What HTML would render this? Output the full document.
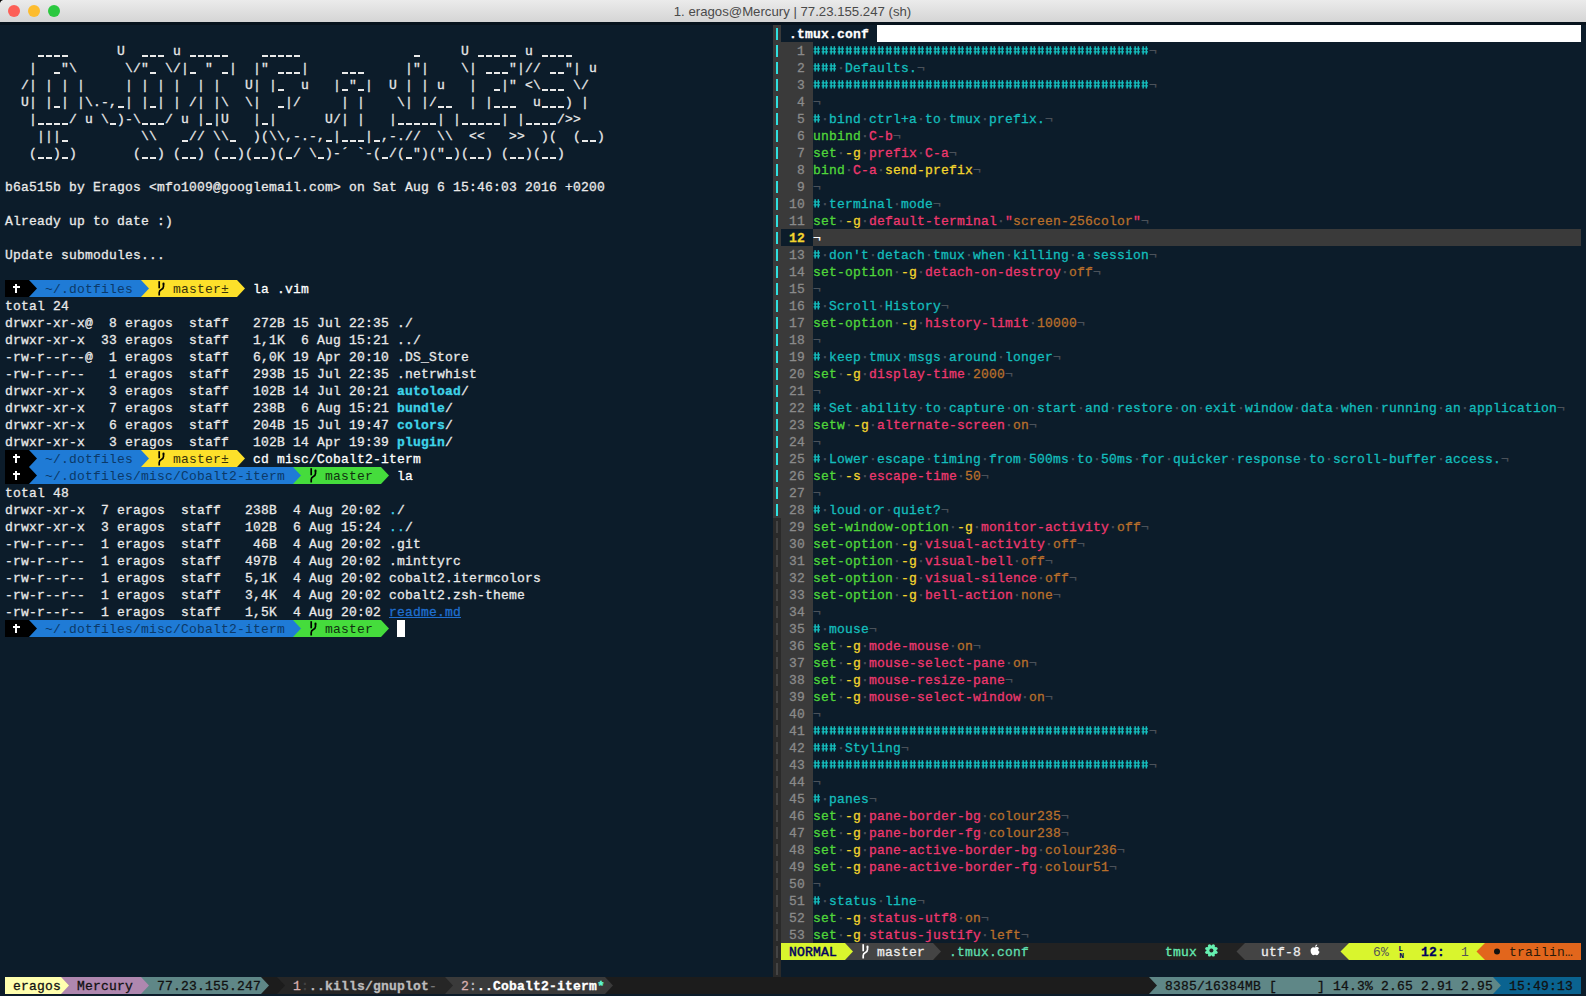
<!DOCTYPE html>
<html><head><meta charset="utf-8">
<style>
html,body{margin:0;padding:0;}
body{width:1586px;height:996px;overflow:hidden;position:relative;background:#0c1c2a;font-family:"Liberation Mono",monospace;font-size:13px;}
.t{position:absolute;white-space:pre;line-height:17px;height:17px;letter-spacing:0.1987px;-webkit-text-stroke:0.3px currentColor;}
.b{position:absolute;height:17px;}
.s{position:absolute;overflow:visible;}
#title{position:absolute;left:0;top:0;width:1586px;height:22px;background:linear-gradient(#ebebeb,#d5d5d5);font-family:"Liberation Sans",sans-serif;font-size:13.2px;color:#4a4a4a;text-align:center;line-height:23px;text-indent:-1px;}
.tl{position:absolute;top:5px;width:12px;height:12px;border-radius:50%;}
</style></head><body>
<div id="title">1. eragos@Mercury | 77.23.155.247 (sh)</div>
<div style="position:absolute;left:0;top:22px;width:1586px;height:3px;background:#07131d"></div>
<svg style="position:absolute;left:0;top:0" width="4" height="4"><path d="M0 0H3Q0.6 0.6 0 3Z" fill="#000"/></svg>
<div class="tl" style="left:8px;background:#fc5f57;border:0"></div>
<div class="tl" style="left:28px;background:#fdbc2e"></div>
<div class="tl" style="left:48px;background:#2bc83f"></div>
<span class="t" style="left:5px;top:43px;color:#e9e9e9;">              U      u                                   U       u     </span>
<div style="position:absolute;left:37.7px;top:55.4px;width:6.6px;height:1.5px;background:#e9e9e9;"></div>
<div style="position:absolute;left:45.7px;top:55.4px;width:6.6px;height:1.5px;background:#e9e9e9;"></div>
<div style="position:absolute;left:53.7px;top:55.4px;width:6.6px;height:1.5px;background:#e9e9e9;"></div>
<div style="position:absolute;left:61.7px;top:55.4px;width:6.6px;height:1.5px;background:#e9e9e9;"></div>
<div style="position:absolute;left:141.7px;top:55.4px;width:6.6px;height:1.5px;background:#e9e9e9;"></div>
<div style="position:absolute;left:149.7px;top:55.4px;width:6.6px;height:1.5px;background:#e9e9e9;"></div>
<div style="position:absolute;left:157.7px;top:55.4px;width:6.6px;height:1.5px;background:#e9e9e9;"></div>
<div style="position:absolute;left:189.7px;top:55.4px;width:6.6px;height:1.5px;background:#e9e9e9;"></div>
<div style="position:absolute;left:197.7px;top:55.4px;width:6.6px;height:1.5px;background:#e9e9e9;"></div>
<div style="position:absolute;left:205.7px;top:55.4px;width:6.6px;height:1.5px;background:#e9e9e9;"></div>
<div style="position:absolute;left:213.7px;top:55.4px;width:6.6px;height:1.5px;background:#e9e9e9;"></div>
<div style="position:absolute;left:221.7px;top:55.4px;width:6.6px;height:1.5px;background:#e9e9e9;"></div>
<div style="position:absolute;left:261.7px;top:55.4px;width:6.6px;height:1.5px;background:#e9e9e9;"></div>
<div style="position:absolute;left:269.7px;top:55.4px;width:6.6px;height:1.5px;background:#e9e9e9;"></div>
<div style="position:absolute;left:277.7px;top:55.4px;width:6.6px;height:1.5px;background:#e9e9e9;"></div>
<div style="position:absolute;left:285.7px;top:55.4px;width:6.6px;height:1.5px;background:#e9e9e9;"></div>
<div style="position:absolute;left:293.7px;top:55.4px;width:6.6px;height:1.5px;background:#e9e9e9;"></div>
<div style="position:absolute;left:413.7px;top:55.4px;width:6.6px;height:1.5px;background:#e9e9e9;"></div>
<div style="position:absolute;left:477.7px;top:55.4px;width:6.6px;height:1.5px;background:#e9e9e9;"></div>
<div style="position:absolute;left:485.7px;top:55.4px;width:6.6px;height:1.5px;background:#e9e9e9;"></div>
<div style="position:absolute;left:493.7px;top:55.4px;width:6.6px;height:1.5px;background:#e9e9e9;"></div>
<div style="position:absolute;left:501.7px;top:55.4px;width:6.6px;height:1.5px;background:#e9e9e9;"></div>
<div style="position:absolute;left:509.7px;top:55.4px;width:6.6px;height:1.5px;background:#e9e9e9;"></div>
<div style="position:absolute;left:541.7px;top:55.4px;width:6.6px;height:1.5px;background:#e9e9e9;"></div>
<div style="position:absolute;left:549.7px;top:55.4px;width:6.6px;height:1.5px;background:#e9e9e9;"></div>
<div style="position:absolute;left:557.7px;top:55.4px;width:6.6px;height:1.5px;background:#e9e9e9;"></div>
<div style="position:absolute;left:565.7px;top:55.4px;width:6.6px;height:1.5px;background:#e9e9e9;"></div>
<span class="t" style="left:5px;top:60px;color:#e9e9e9;">   |   &quot;\      \/&quot;  \/|  &quot;  |  |&quot;    |            |&quot;|    \|    &quot;|//   &quot;| u</span>
<div style="position:absolute;left:53.7px;top:72.4px;width:6.6px;height:1.5px;background:#e9e9e9;"></div>
<div style="position:absolute;left:149.7px;top:72.4px;width:6.6px;height:1.5px;background:#e9e9e9;"></div>
<div style="position:absolute;left:189.7px;top:72.4px;width:6.6px;height:1.5px;background:#e9e9e9;"></div>
<div style="position:absolute;left:221.7px;top:72.4px;width:6.6px;height:1.5px;background:#e9e9e9;"></div>
<div style="position:absolute;left:277.7px;top:72.4px;width:6.6px;height:1.5px;background:#e9e9e9;"></div>
<div style="position:absolute;left:285.7px;top:72.4px;width:6.6px;height:1.5px;background:#e9e9e9;"></div>
<div style="position:absolute;left:293.7px;top:72.4px;width:6.6px;height:1.5px;background:#e9e9e9;"></div>
<div style="position:absolute;left:341.7px;top:72.4px;width:6.6px;height:1.5px;background:#e9e9e9;"></div>
<div style="position:absolute;left:349.7px;top:72.4px;width:6.6px;height:1.5px;background:#e9e9e9;"></div>
<div style="position:absolute;left:357.7px;top:72.4px;width:6.6px;height:1.5px;background:#e9e9e9;"></div>
<div style="position:absolute;left:485.7px;top:72.4px;width:6.6px;height:1.5px;background:#e9e9e9;"></div>
<div style="position:absolute;left:493.7px;top:72.4px;width:6.6px;height:1.5px;background:#e9e9e9;"></div>
<div style="position:absolute;left:501.7px;top:72.4px;width:6.6px;height:1.5px;background:#e9e9e9;"></div>
<div style="position:absolute;left:549.7px;top:72.4px;width:6.6px;height:1.5px;background:#e9e9e9;"></div>
<div style="position:absolute;left:557.7px;top:72.4px;width:6.6px;height:1.5px;background:#e9e9e9;"></div>
<span class="t" style="left:5px;top:77px;color:#e9e9e9;">  /| | | |     | | | |  | |   U| |   u   | &quot; |  U | | u   |   |&quot; &lt;\    \/</span>
<div style="position:absolute;left:277.7px;top:89.4px;width:6.6px;height:1.5px;background:#e9e9e9;"></div>
<div style="position:absolute;left:341.7px;top:89.4px;width:6.6px;height:1.5px;background:#e9e9e9;"></div>
<div style="position:absolute;left:357.7px;top:89.4px;width:6.6px;height:1.5px;background:#e9e9e9;"></div>
<div style="position:absolute;left:493.7px;top:89.4px;width:6.6px;height:1.5px;background:#e9e9e9;"></div>
<div style="position:absolute;left:541.7px;top:89.4px;width:6.6px;height:1.5px;background:#e9e9e9;"></div>
<div style="position:absolute;left:549.7px;top:89.4px;width:6.6px;height:1.5px;background:#e9e9e9;"></div>
<div style="position:absolute;left:557.7px;top:89.4px;width:6.6px;height:1.5px;background:#e9e9e9;"></div>
<span class="t" style="left:5px;top:94px;color:#e9e9e9;">  U| | | |\.-, | | | | /| |\  \|   |/     | |    \| |/    | |     u   ) |</span>
<div style="position:absolute;left:53.7px;top:106.4px;width:6.6px;height:1.5px;background:#e9e9e9;"></div>
<div style="position:absolute;left:117.7px;top:106.4px;width:6.6px;height:1.5px;background:#e9e9e9;"></div>
<div style="position:absolute;left:149.7px;top:106.4px;width:6.6px;height:1.5px;background:#e9e9e9;"></div>
<div style="position:absolute;left:277.7px;top:106.4px;width:6.6px;height:1.5px;background:#e9e9e9;"></div>
<div style="position:absolute;left:437.7px;top:106.4px;width:6.6px;height:1.5px;background:#e9e9e9;"></div>
<div style="position:absolute;left:445.7px;top:106.4px;width:6.6px;height:1.5px;background:#e9e9e9;"></div>
<div style="position:absolute;left:493.7px;top:106.4px;width:6.6px;height:1.5px;background:#e9e9e9;"></div>
<div style="position:absolute;left:501.7px;top:106.4px;width:6.6px;height:1.5px;background:#e9e9e9;"></div>
<div style="position:absolute;left:509.7px;top:106.4px;width:6.6px;height:1.5px;background:#e9e9e9;"></div>
<div style="position:absolute;left:541.7px;top:106.4px;width:6.6px;height:1.5px;background:#e9e9e9;"></div>
<div style="position:absolute;left:549.7px;top:106.4px;width:6.6px;height:1.5px;background:#e9e9e9;"></div>
<div style="position:absolute;left:557.7px;top:106.4px;width:6.6px;height:1.5px;background:#e9e9e9;"></div>
<span class="t" style="left:5px;top:111px;color:#e9e9e9;">   |    / u \ )-\   / u | |U   | |      U/| |   |     | |     | |    /&gt;&gt;</span>
<div style="position:absolute;left:37.7px;top:123.4px;width:6.6px;height:1.5px;background:#e9e9e9;"></div>
<div style="position:absolute;left:45.7px;top:123.4px;width:6.6px;height:1.5px;background:#e9e9e9;"></div>
<div style="position:absolute;left:53.7px;top:123.4px;width:6.6px;height:1.5px;background:#e9e9e9;"></div>
<div style="position:absolute;left:61.7px;top:123.4px;width:6.6px;height:1.5px;background:#e9e9e9;"></div>
<div style="position:absolute;left:109.7px;top:123.4px;width:6.6px;height:1.5px;background:#e9e9e9;"></div>
<div style="position:absolute;left:141.7px;top:123.4px;width:6.6px;height:1.5px;background:#e9e9e9;"></div>
<div style="position:absolute;left:149.7px;top:123.4px;width:6.6px;height:1.5px;background:#e9e9e9;"></div>
<div style="position:absolute;left:157.7px;top:123.4px;width:6.6px;height:1.5px;background:#e9e9e9;"></div>
<div style="position:absolute;left:205.7px;top:123.4px;width:6.6px;height:1.5px;background:#e9e9e9;"></div>
<div style="position:absolute;left:261.7px;top:123.4px;width:6.6px;height:1.5px;background:#e9e9e9;"></div>
<div style="position:absolute;left:397.7px;top:123.4px;width:6.6px;height:1.5px;background:#e9e9e9;"></div>
<div style="position:absolute;left:405.7px;top:123.4px;width:6.6px;height:1.5px;background:#e9e9e9;"></div>
<div style="position:absolute;left:413.7px;top:123.4px;width:6.6px;height:1.5px;background:#e9e9e9;"></div>
<div style="position:absolute;left:421.7px;top:123.4px;width:6.6px;height:1.5px;background:#e9e9e9;"></div>
<div style="position:absolute;left:429.7px;top:123.4px;width:6.6px;height:1.5px;background:#e9e9e9;"></div>
<div style="position:absolute;left:461.7px;top:123.4px;width:6.6px;height:1.5px;background:#e9e9e9;"></div>
<div style="position:absolute;left:469.7px;top:123.4px;width:6.6px;height:1.5px;background:#e9e9e9;"></div>
<div style="position:absolute;left:477.7px;top:123.4px;width:6.6px;height:1.5px;background:#e9e9e9;"></div>
<div style="position:absolute;left:485.7px;top:123.4px;width:6.6px;height:1.5px;background:#e9e9e9;"></div>
<div style="position:absolute;left:493.7px;top:123.4px;width:6.6px;height:1.5px;background:#e9e9e9;"></div>
<div style="position:absolute;left:525.7px;top:123.4px;width:6.6px;height:1.5px;background:#e9e9e9;"></div>
<div style="position:absolute;left:533.7px;top:123.4px;width:6.6px;height:1.5px;background:#e9e9e9;"></div>
<div style="position:absolute;left:541.7px;top:123.4px;width:6.6px;height:1.5px;background:#e9e9e9;"></div>
<div style="position:absolute;left:549.7px;top:123.4px;width:6.6px;height:1.5px;background:#e9e9e9;"></div>
<span class="t" style="left:5px;top:128px;color:#e9e9e9;">    |||          \\    // \\   )(\\,-.-, |   | ,-.//  \\  &lt;&lt;   &gt;&gt;  )(  (  )</span>
<div style="position:absolute;left:61.7px;top:140.4px;width:6.6px;height:1.5px;background:#e9e9e9;"></div>
<div style="position:absolute;left:181.7px;top:140.4px;width:6.6px;height:1.5px;background:#e9e9e9;"></div>
<div style="position:absolute;left:229.7px;top:140.4px;width:6.6px;height:1.5px;background:#e9e9e9;"></div>
<div style="position:absolute;left:325.7px;top:140.4px;width:6.6px;height:1.5px;background:#e9e9e9;"></div>
<div style="position:absolute;left:341.7px;top:140.4px;width:6.6px;height:1.5px;background:#e9e9e9;"></div>
<div style="position:absolute;left:349.7px;top:140.4px;width:6.6px;height:1.5px;background:#e9e9e9;"></div>
<div style="position:absolute;left:357.7px;top:140.4px;width:6.6px;height:1.5px;background:#e9e9e9;"></div>
<div style="position:absolute;left:373.7px;top:140.4px;width:6.6px;height:1.5px;background:#e9e9e9;"></div>
<div style="position:absolute;left:581.7px;top:140.4px;width:6.6px;height:1.5px;background:#e9e9e9;"></div>
<div style="position:absolute;left:589.7px;top:140.4px;width:6.6px;height:1.5px;background:#e9e9e9;"></div>
<span class="t" style="left:5px;top:145px;color:#e9e9e9;">   (  ) )       (  ) (  ) (  )(  )( / \ )-´ `-( /( &quot;)(&quot; )(  ) (  )(  )</span>
<div style="position:absolute;left:37.7px;top:157.4px;width:6.6px;height:1.5px;background:#e9e9e9;"></div>
<div style="position:absolute;left:45.7px;top:157.4px;width:6.6px;height:1.5px;background:#e9e9e9;"></div>
<div style="position:absolute;left:61.7px;top:157.4px;width:6.6px;height:1.5px;background:#e9e9e9;"></div>
<div style="position:absolute;left:141.7px;top:157.4px;width:6.6px;height:1.5px;background:#e9e9e9;"></div>
<div style="position:absolute;left:149.7px;top:157.4px;width:6.6px;height:1.5px;background:#e9e9e9;"></div>
<div style="position:absolute;left:181.7px;top:157.4px;width:6.6px;height:1.5px;background:#e9e9e9;"></div>
<div style="position:absolute;left:189.7px;top:157.4px;width:6.6px;height:1.5px;background:#e9e9e9;"></div>
<div style="position:absolute;left:221.7px;top:157.4px;width:6.6px;height:1.5px;background:#e9e9e9;"></div>
<div style="position:absolute;left:229.7px;top:157.4px;width:6.6px;height:1.5px;background:#e9e9e9;"></div>
<div style="position:absolute;left:253.7px;top:157.4px;width:6.6px;height:1.5px;background:#e9e9e9;"></div>
<div style="position:absolute;left:261.7px;top:157.4px;width:6.6px;height:1.5px;background:#e9e9e9;"></div>
<div style="position:absolute;left:285.7px;top:157.4px;width:6.6px;height:1.5px;background:#e9e9e9;"></div>
<div style="position:absolute;left:317.7px;top:157.4px;width:6.6px;height:1.5px;background:#e9e9e9;"></div>
<div style="position:absolute;left:381.7px;top:157.4px;width:6.6px;height:1.5px;background:#e9e9e9;"></div>
<div style="position:absolute;left:405.7px;top:157.4px;width:6.6px;height:1.5px;background:#e9e9e9;"></div>
<div style="position:absolute;left:445.7px;top:157.4px;width:6.6px;height:1.5px;background:#e9e9e9;"></div>
<div style="position:absolute;left:469.7px;top:157.4px;width:6.6px;height:1.5px;background:#e9e9e9;"></div>
<div style="position:absolute;left:477.7px;top:157.4px;width:6.6px;height:1.5px;background:#e9e9e9;"></div>
<div style="position:absolute;left:509.7px;top:157.4px;width:6.6px;height:1.5px;background:#e9e9e9;"></div>
<div style="position:absolute;left:517.7px;top:157.4px;width:6.6px;height:1.5px;background:#e9e9e9;"></div>
<div style="position:absolute;left:541.7px;top:157.4px;width:6.6px;height:1.5px;background:#e9e9e9;"></div>
<div style="position:absolute;left:549.7px;top:157.4px;width:6.6px;height:1.5px;background:#e9e9e9;"></div>
<span class="t" style="left:5px;top:179px;color:#e9e9e9;">b6a515b by Eragos &lt;mfo1009@googlemail.com&gt; on Sat Aug 6 15:46:03 2016 +0200</span>
<span class="t" style="left:5px;top:213px;color:#e9e9e9;">Already up to date :)</span>
<span class="t" style="left:5px;top:247px;color:#e9e9e9;">Update submodules...</span>
<div class="b" style="left:5px;top:280px;width:24px;background:#000000;"></div>
<svg class="s" style="left:13px;top:280px" width="8" height="17" viewBox="0 0 8 17"><rect x="2" y="4" width="2" height="9" fill="#ffffff"/><rect x="0" y="6" width="7" height="2" fill="#ffffff"/></svg>
<div class="b" style="left:37px;top:280px;width:104px;background:#1f7bd6;"></div>
<div class="b" style="left:29px;top:280px;width:8px;background:#1f7bd6;"></div>
<svg class="s" style="left:29px;top:280px" width="10" height="17"><polygon points="0,0 8,8.5 0,17" fill="#000000"/></svg>
<span class="t" style="left:45px;top:281px;color:#0b3968;-webkit-text-stroke:0;">~/.dotfiles</span>
<div class="b" style="left:149px;top:280px;width:88px;background:#fde02a;"></div>
<div class="b" style="left:141px;top:280px;width:8px;background:#fde02a;"></div>
<svg class="s" style="left:141px;top:280px" width="10" height="17"><polygon points="0,0 8,8.5 0,17" fill="#1f7bd6"/></svg>
<svg class="s" style="left:157px;top:280px" width="8" height="17" viewBox="0 0 8 17"><path d="M2.2 1.2V8.3" stroke="#000000" stroke-width="1.7" fill="none"/><path d="M6.5 4V6.6Q6.5 8.4 4.4 9.4Q2.2 10.4 2.2 12.6V15.6" stroke="#000000" stroke-width="1.7" fill="none"/><circle cx="6.5" cy="3.7" r="1.1" fill="#000000"/></svg>
<span class="t" style="left:173px;top:281px;color:#36320c;-webkit-text-stroke:0;">master±</span>
<svg class="s" style="left:237px;top:280px" width="10" height="17"><polygon points="0,0 8,8.5 0,17" fill="#fde02a"/></svg>
<span class="t" style="left:253px;top:281px;color:#ffffff;">la .vim</span>
<span class="t" style="left:5px;top:298px;color:#e9e9e9;">total 24</span>
<span class="t" style="left:5px;top:315px;color:#e9e9e9;">drwxr-xr-x@  8 eragos  staff   272B 15 Jul 22:35 </span>
<span class="t" style="left:397px;top:315px;color:#e9e9e9;">./</span>
<span class="t" style="left:5px;top:332px;color:#e9e9e9;">drwxr-xr-x  33 eragos  staff   1,1K  6 Aug 15:21 </span>
<span class="t" style="left:397px;top:332px;color:#e9e9e9;">../</span>
<span class="t" style="left:5px;top:349px;color:#e9e9e9;">-rw-r--r--@  1 eragos  staff   6,0K 19 Apr 20:10 </span>
<span class="t" style="left:397px;top:349px;color:#e9e9e9;">.DS_Store</span>
<span class="t" style="left:5px;top:366px;color:#e9e9e9;">-rw-r--r--   1 eragos  staff   293B 15 Jul 22:35 </span>
<span class="t" style="left:397px;top:366px;color:#e9e9e9;">.netrwhist</span>
<span class="t" style="left:5px;top:383px;color:#e9e9e9;">drwxr-xr-x   3 eragos  staff   102B 14 Jul 20:21 </span>
<span class="t" style="left:397px;top:383px;color:#3fd3e8;font-weight:bold;">autoload</span>
<span class="t" style="left:461px;top:383px;color:#e9e9e9;">/</span>
<span class="t" style="left:5px;top:400px;color:#e9e9e9;">drwxr-xr-x   7 eragos  staff   238B  6 Aug 15:21 </span>
<span class="t" style="left:397px;top:400px;color:#3fd3e8;font-weight:bold;">bundle</span>
<span class="t" style="left:445px;top:400px;color:#e9e9e9;">/</span>
<span class="t" style="left:5px;top:417px;color:#e9e9e9;">drwxr-xr-x   6 eragos  staff   204B 15 Jul 19:47 </span>
<span class="t" style="left:397px;top:417px;color:#3fd3e8;font-weight:bold;">colors</span>
<span class="t" style="left:445px;top:417px;color:#e9e9e9;">/</span>
<span class="t" style="left:5px;top:434px;color:#e9e9e9;">drwxr-xr-x   3 eragos  staff   102B 14 Apr 19:39 </span>
<span class="t" style="left:397px;top:434px;color:#3fd3e8;font-weight:bold;">plugin</span>
<span class="t" style="left:445px;top:434px;color:#e9e9e9;">/</span>
<div class="b" style="left:5px;top:450px;width:24px;background:#000000;"></div>
<svg class="s" style="left:13px;top:450px" width="8" height="17" viewBox="0 0 8 17"><rect x="2" y="4" width="2" height="9" fill="#ffffff"/><rect x="0" y="6" width="7" height="2" fill="#ffffff"/></svg>
<div class="b" style="left:37px;top:450px;width:104px;background:#1f7bd6;"></div>
<div class="b" style="left:29px;top:450px;width:8px;background:#1f7bd6;"></div>
<svg class="s" style="left:29px;top:450px" width="10" height="17"><polygon points="0,0 8,8.5 0,17" fill="#000000"/></svg>
<span class="t" style="left:45px;top:451px;color:#0b3968;-webkit-text-stroke:0;">~/.dotfiles</span>
<div class="b" style="left:149px;top:450px;width:88px;background:#fde02a;"></div>
<div class="b" style="left:141px;top:450px;width:8px;background:#fde02a;"></div>
<svg class="s" style="left:141px;top:450px" width="10" height="17"><polygon points="0,0 8,8.5 0,17" fill="#1f7bd6"/></svg>
<svg class="s" style="left:157px;top:450px" width="8" height="17" viewBox="0 0 8 17"><path d="M2.2 1.2V8.3" stroke="#000000" stroke-width="1.7" fill="none"/><path d="M6.5 4V6.6Q6.5 8.4 4.4 9.4Q2.2 10.4 2.2 12.6V15.6" stroke="#000000" stroke-width="1.7" fill="none"/><circle cx="6.5" cy="3.7" r="1.1" fill="#000000"/></svg>
<span class="t" style="left:173px;top:451px;color:#36320c;-webkit-text-stroke:0;">master±</span>
<svg class="s" style="left:237px;top:450px" width="10" height="17"><polygon points="0,0 8,8.5 0,17" fill="#fde02a"/></svg>
<span class="t" style="left:253px;top:451px;color:#ffffff;">cd misc/Cobalt2-iterm</span>
<div class="b" style="left:5px;top:467px;width:24px;background:#000000;"></div>
<svg class="s" style="left:13px;top:467px" width="8" height="17" viewBox="0 0 8 17"><rect x="2" y="4" width="2" height="9" fill="#ffffff"/><rect x="0" y="6" width="7" height="2" fill="#ffffff"/></svg>
<div class="b" style="left:37px;top:467px;width:256px;background:#1f7bd6;"></div>
<div class="b" style="left:29px;top:467px;width:8px;background:#1f7bd6;"></div>
<svg class="s" style="left:29px;top:467px" width="10" height="17"><polygon points="0,0 8,8.5 0,17" fill="#000000"/></svg>
<span class="t" style="left:45px;top:468px;color:#0b3968;-webkit-text-stroke:0;">~/.dotfiles/misc/Cobalt2-iterm</span>
<div class="b" style="left:301px;top:467px;width:80px;background:#45dc3c;"></div>
<div class="b" style="left:293px;top:467px;width:8px;background:#45dc3c;"></div>
<svg class="s" style="left:293px;top:467px" width="10" height="17"><polygon points="0,0 8,8.5 0,17" fill="#1f7bd6"/></svg>
<svg class="s" style="left:309px;top:467px" width="8" height="17" viewBox="0 0 8 17"><path d="M2.2 1.2V8.3" stroke="#000000" stroke-width="1.7" fill="none"/><path d="M6.5 4V6.6Q6.5 8.4 4.4 9.4Q2.2 10.4 2.2 12.6V15.6" stroke="#000000" stroke-width="1.7" fill="none"/><circle cx="6.5" cy="3.7" r="1.1" fill="#000000"/></svg>
<span class="t" style="left:325px;top:468px;color:#103010;-webkit-text-stroke:0;">master</span>
<svg class="s" style="left:381px;top:467px" width="10" height="17"><polygon points="0,0 8,8.5 0,17" fill="#45dc3c"/></svg>
<span class="t" style="left:397px;top:468px;color:#ffffff;">la</span>
<span class="t" style="left:5px;top:485px;color:#e9e9e9;">total 48</span>
<span class="t" style="left:5px;top:502px;color:#e9e9e9;">drwxr-xr-x  7 eragos  staff   238B  4 Aug 20:02 </span>
<span class="t" style="left:389px;top:502px;color:#3fd3e8;">.</span>
<span class="t" style="left:397px;top:502px;color:#e9e9e9;">/</span>
<span class="t" style="left:5px;top:519px;color:#e9e9e9;">drwxr-xr-x  3 eragos  staff   102B  6 Aug 15:24 </span>
<span class="t" style="left:389px;top:519px;color:#3fd3e8;">..</span>
<span class="t" style="left:405px;top:519px;color:#e9e9e9;">/</span>
<span class="t" style="left:5px;top:536px;color:#e9e9e9;">-rw-r--r--  1 eragos  staff    46B  4 Aug 20:02 </span>
<span class="t" style="left:389px;top:536px;color:#e9e9e9;">.git</span>
<span class="t" style="left:5px;top:553px;color:#e9e9e9;">-rw-r--r--  1 eragos  staff   497B  4 Aug 20:02 </span>
<span class="t" style="left:389px;top:553px;color:#e9e9e9;">.minttyrc</span>
<span class="t" style="left:5px;top:570px;color:#e9e9e9;">-rw-r--r--  1 eragos  staff   5,1K  4 Aug 20:02 </span>
<span class="t" style="left:389px;top:570px;color:#e9e9e9;">cobalt2.itermcolors</span>
<span class="t" style="left:5px;top:587px;color:#e9e9e9;">-rw-r--r--  1 eragos  staff   3,4K  4 Aug 20:02 </span>
<span class="t" style="left:389px;top:587px;color:#e9e9e9;">cobalt2.zsh-theme</span>
<span class="t" style="left:5px;top:604px;color:#e9e9e9;">-rw-r--r--  1 eragos  staff   1,5K  4 Aug 20:02 </span>
<span class="t" style="left:389px;top:604px;color:#1f6fd0;text-decoration:underline;">readme.md</span>
<div class="b" style="left:5px;top:620px;width:24px;background:#000000;"></div>
<svg class="s" style="left:13px;top:620px" width="8" height="17" viewBox="0 0 8 17"><rect x="2" y="4" width="2" height="9" fill="#ffffff"/><rect x="0" y="6" width="7" height="2" fill="#ffffff"/></svg>
<div class="b" style="left:37px;top:620px;width:256px;background:#1f7bd6;"></div>
<div class="b" style="left:29px;top:620px;width:8px;background:#1f7bd6;"></div>
<svg class="s" style="left:29px;top:620px" width="10" height="17"><polygon points="0,0 8,8.5 0,17" fill="#000000"/></svg>
<span class="t" style="left:45px;top:621px;color:#0b3968;-webkit-text-stroke:0;">~/.dotfiles/misc/Cobalt2-iterm</span>
<div class="b" style="left:301px;top:620px;width:80px;background:#45dc3c;"></div>
<div class="b" style="left:293px;top:620px;width:8px;background:#45dc3c;"></div>
<svg class="s" style="left:293px;top:620px" width="10" height="17"><polygon points="0,0 8,8.5 0,17" fill="#1f7bd6"/></svg>
<svg class="s" style="left:309px;top:620px" width="8" height="17" viewBox="0 0 8 17"><path d="M2.2 1.2V8.3" stroke="#000000" stroke-width="1.7" fill="none"/><path d="M6.5 4V6.6Q6.5 8.4 4.4 9.4Q2.2 10.4 2.2 12.6V15.6" stroke="#000000" stroke-width="1.7" fill="none"/><circle cx="6.5" cy="3.7" r="1.1" fill="#000000"/></svg>
<span class="t" style="left:325px;top:621px;color:#103010;-webkit-text-stroke:0;">master</span>
<svg class="s" style="left:381px;top:620px" width="10" height="17"><polygon points="0,0 8,8.5 0,17" fill="#45dc3c"/></svg>
<div class="b" style="left:397px;top:620px;width:8px;background:#ffffff;"></div>
<div class="b" style="left:773px;top:25px;width:8px;background:#3a3a3a;"></div>
<div style="position:absolute;left:776px;top:28px;width:2px;height:12px;background:#2fe0e0;"></div>
<div class="b" style="left:773px;top:42px;width:8px;background:#3a3a3a;"></div>
<div style="position:absolute;left:776px;top:45px;width:2px;height:12px;background:#2fe0e0;"></div>
<div class="b" style="left:773px;top:59px;width:8px;background:#3a3a3a;"></div>
<div style="position:absolute;left:776px;top:62px;width:2px;height:12px;background:#2fe0e0;"></div>
<div class="b" style="left:773px;top:76px;width:8px;background:#3a3a3a;"></div>
<div style="position:absolute;left:776px;top:79px;width:2px;height:12px;background:#2fe0e0;"></div>
<div class="b" style="left:773px;top:93px;width:8px;background:#3a3a3a;"></div>
<div style="position:absolute;left:776px;top:96px;width:2px;height:12px;background:#2fe0e0;"></div>
<div class="b" style="left:773px;top:110px;width:8px;background:#3a3a3a;"></div>
<div style="position:absolute;left:776px;top:113px;width:2px;height:12px;background:#2fe0e0;"></div>
<div class="b" style="left:773px;top:127px;width:8px;background:#3a3a3a;"></div>
<div style="position:absolute;left:776px;top:130px;width:2px;height:12px;background:#2fe0e0;"></div>
<div class="b" style="left:773px;top:144px;width:8px;background:#3a3a3a;"></div>
<div style="position:absolute;left:776px;top:147px;width:2px;height:12px;background:#2fe0e0;"></div>
<div class="b" style="left:773px;top:161px;width:8px;background:#3a3a3a;"></div>
<div style="position:absolute;left:776px;top:164px;width:2px;height:12px;background:#2fe0e0;"></div>
<div class="b" style="left:773px;top:178px;width:8px;background:#3a3a3a;"></div>
<div style="position:absolute;left:776px;top:181px;width:2px;height:12px;background:#2fe0e0;"></div>
<div class="b" style="left:773px;top:195px;width:8px;background:#3a3a3a;"></div>
<div style="position:absolute;left:776px;top:198px;width:2px;height:12px;background:#2fe0e0;"></div>
<div class="b" style="left:773px;top:212px;width:8px;background:#3a3a3a;"></div>
<div style="position:absolute;left:776px;top:215px;width:2px;height:12px;background:#2fe0e0;"></div>
<div class="b" style="left:773px;top:229px;width:8px;background:#3a3a3a;"></div>
<div style="position:absolute;left:776px;top:232px;width:2px;height:12px;background:#2fe0e0;"></div>
<div class="b" style="left:773px;top:246px;width:8px;background:#3a3a3a;"></div>
<div style="position:absolute;left:776px;top:249px;width:2px;height:12px;background:#2fe0e0;"></div>
<div class="b" style="left:773px;top:263px;width:8px;background:#3a3a3a;"></div>
<div style="position:absolute;left:776px;top:266px;width:2px;height:12px;background:#2fe0e0;"></div>
<div class="b" style="left:773px;top:280px;width:8px;background:#3a3a3a;"></div>
<div style="position:absolute;left:776px;top:283px;width:2px;height:12px;background:#2fe0e0;"></div>
<div class="b" style="left:773px;top:297px;width:8px;background:#3a3a3a;"></div>
<div style="position:absolute;left:776px;top:300px;width:2px;height:12px;background:#2fe0e0;"></div>
<div class="b" style="left:773px;top:314px;width:8px;background:#3a3a3a;"></div>
<div style="position:absolute;left:776px;top:317px;width:2px;height:12px;background:#2fe0e0;"></div>
<div class="b" style="left:773px;top:331px;width:8px;background:#3a3a3a;"></div>
<div style="position:absolute;left:776px;top:334px;width:2px;height:12px;background:#2fe0e0;"></div>
<div class="b" style="left:773px;top:348px;width:8px;background:#3a3a3a;"></div>
<div style="position:absolute;left:776px;top:351px;width:2px;height:12px;background:#2fe0e0;"></div>
<div class="b" style="left:773px;top:365px;width:8px;background:#3a3a3a;"></div>
<div style="position:absolute;left:776px;top:368px;width:2px;height:12px;background:#2fe0e0;"></div>
<div class="b" style="left:773px;top:382px;width:8px;background:#3a3a3a;"></div>
<div style="position:absolute;left:776px;top:385px;width:2px;height:12px;background:#2fe0e0;"></div>
<div class="b" style="left:773px;top:399px;width:8px;background:#3a3a3a;"></div>
<div style="position:absolute;left:776px;top:402px;width:2px;height:12px;background:#2fe0e0;"></div>
<div class="b" style="left:773px;top:416px;width:8px;background:#3a3a3a;"></div>
<div style="position:absolute;left:776px;top:419px;width:2px;height:12px;background:#2fe0e0;"></div>
<div class="b" style="left:773px;top:433px;width:8px;background:#3a3a3a;"></div>
<div style="position:absolute;left:776px;top:436px;width:2px;height:12px;background:#2fe0e0;"></div>
<div class="b" style="left:773px;top:450px;width:8px;background:#3a3a3a;"></div>
<div style="position:absolute;left:776px;top:453px;width:2px;height:12px;background:#2fe0e0;"></div>
<div class="b" style="left:773px;top:467px;width:8px;background:#3a3a3a;"></div>
<div style="position:absolute;left:776px;top:470px;width:2px;height:12px;background:#2fe0e0;"></div>
<div class="b" style="left:773px;top:484px;width:8px;background:#3a3a3a;"></div>
<div style="position:absolute;left:776px;top:487px;width:2px;height:12px;background:#2fe0e0;"></div>
<div class="b" style="left:773px;top:501px;width:8px;background:#3a3a3a;"></div>
<div style="position:absolute;left:776px;top:504px;width:2px;height:12px;background:#2fe0e0;"></div>
<div class="b" style="left:773px;top:518px;width:8px;background:#2a2a2a;"></div>
<div style="position:absolute;left:776px;top:521px;width:2px;height:12px;background:#444444;"></div>
<div class="b" style="left:773px;top:535px;width:8px;background:#2a2a2a;"></div>
<div style="position:absolute;left:776px;top:538px;width:2px;height:12px;background:#444444;"></div>
<div class="b" style="left:773px;top:552px;width:8px;background:#2a2a2a;"></div>
<div style="position:absolute;left:776px;top:555px;width:2px;height:12px;background:#444444;"></div>
<div class="b" style="left:773px;top:569px;width:8px;background:#2a2a2a;"></div>
<div style="position:absolute;left:776px;top:572px;width:2px;height:12px;background:#444444;"></div>
<div class="b" style="left:773px;top:586px;width:8px;background:#2a2a2a;"></div>
<div style="position:absolute;left:776px;top:589px;width:2px;height:12px;background:#444444;"></div>
<div class="b" style="left:773px;top:603px;width:8px;background:#2a2a2a;"></div>
<div style="position:absolute;left:776px;top:606px;width:2px;height:12px;background:#444444;"></div>
<div class="b" style="left:773px;top:620px;width:8px;background:#2a2a2a;"></div>
<div style="position:absolute;left:776px;top:623px;width:2px;height:12px;background:#444444;"></div>
<div class="b" style="left:773px;top:637px;width:8px;background:#2a2a2a;"></div>
<div style="position:absolute;left:776px;top:640px;width:2px;height:12px;background:#444444;"></div>
<div class="b" style="left:773px;top:654px;width:8px;background:#2a2a2a;"></div>
<div style="position:absolute;left:776px;top:657px;width:2px;height:12px;background:#444444;"></div>
<div class="b" style="left:773px;top:671px;width:8px;background:#2a2a2a;"></div>
<div style="position:absolute;left:776px;top:674px;width:2px;height:12px;background:#444444;"></div>
<div class="b" style="left:773px;top:688px;width:8px;background:#2a2a2a;"></div>
<div style="position:absolute;left:776px;top:691px;width:2px;height:12px;background:#444444;"></div>
<div class="b" style="left:773px;top:705px;width:8px;background:#2a2a2a;"></div>
<div style="position:absolute;left:776px;top:708px;width:2px;height:12px;background:#444444;"></div>
<div class="b" style="left:773px;top:722px;width:8px;background:#2a2a2a;"></div>
<div style="position:absolute;left:776px;top:725px;width:2px;height:12px;background:#444444;"></div>
<div class="b" style="left:773px;top:739px;width:8px;background:#2a2a2a;"></div>
<div style="position:absolute;left:776px;top:742px;width:2px;height:12px;background:#444444;"></div>
<div class="b" style="left:773px;top:756px;width:8px;background:#2a2a2a;"></div>
<div style="position:absolute;left:776px;top:759px;width:2px;height:12px;background:#444444;"></div>
<div class="b" style="left:773px;top:773px;width:8px;background:#2a2a2a;"></div>
<div style="position:absolute;left:776px;top:776px;width:2px;height:12px;background:#444444;"></div>
<div class="b" style="left:773px;top:790px;width:8px;background:#2a2a2a;"></div>
<div style="position:absolute;left:776px;top:793px;width:2px;height:12px;background:#444444;"></div>
<div class="b" style="left:773px;top:807px;width:8px;background:#2a2a2a;"></div>
<div style="position:absolute;left:776px;top:810px;width:2px;height:12px;background:#444444;"></div>
<div class="b" style="left:773px;top:824px;width:8px;background:#2a2a2a;"></div>
<div style="position:absolute;left:776px;top:827px;width:2px;height:12px;background:#444444;"></div>
<div class="b" style="left:773px;top:841px;width:8px;background:#2a2a2a;"></div>
<div style="position:absolute;left:776px;top:844px;width:2px;height:12px;background:#444444;"></div>
<div class="b" style="left:773px;top:858px;width:8px;background:#2a2a2a;"></div>
<div style="position:absolute;left:776px;top:861px;width:2px;height:12px;background:#444444;"></div>
<div class="b" style="left:773px;top:875px;width:8px;background:#2a2a2a;"></div>
<div style="position:absolute;left:776px;top:878px;width:2px;height:12px;background:#444444;"></div>
<div class="b" style="left:773px;top:892px;width:8px;background:#2a2a2a;"></div>
<div style="position:absolute;left:776px;top:895px;width:2px;height:12px;background:#444444;"></div>
<div class="b" style="left:773px;top:909px;width:8px;background:#2a2a2a;"></div>
<div style="position:absolute;left:776px;top:912px;width:2px;height:12px;background:#444444;"></div>
<div class="b" style="left:773px;top:926px;width:8px;background:#2a2a2a;"></div>
<div style="position:absolute;left:776px;top:929px;width:2px;height:12px;background:#444444;"></div>
<div class="b" style="left:773px;top:943px;width:8px;background:#2a2a2a;"></div>
<div style="position:absolute;left:776px;top:946px;width:2px;height:12px;background:#444444;"></div>
<div class="b" style="left:773px;top:960px;width:8px;background:#2a2a2a;"></div>
<div style="position:absolute;left:776px;top:963px;width:2px;height:12px;background:#444444;"></div>
<span class="t" style="left:789px;top:26px;color:#ffffff;font-weight:bold;">.tmux.conf</span>
<div style="position:absolute;left:877px;top:25px;width:704px;height:17px;background:#ffffff;"></div>
<div class="b" style="left:781px;top:42px;width:32px;background:#3a3a3a;"></div>
<span class="t" style="left:781px;top:43px;color:#8a8a8a;">  1</span>
<svg class="s" style="left:813px;top:42px" width="336" height="17" viewBox="0 0 336 17"><path d="M1.4 4.3h1.5v8.3h-1.5zM4.6 4.3h1.5v8.3h-1.5zM0.6 6.2h6.4v1.2h-6.4zM0.6 9.2h6.4v1.2h-6.4zM9.4 4.3h1.5v8.3h-1.5zM12.6 4.3h1.5v8.3h-1.5zM8.6 6.2h6.4v1.2h-6.4zM8.6 9.2h6.4v1.2h-6.4zM17.4 4.3h1.5v8.3h-1.5zM20.6 4.3h1.5v8.3h-1.5zM16.6 6.2h6.4v1.2h-6.4zM16.6 9.2h6.4v1.2h-6.4zM25.4 4.3h1.5v8.3h-1.5zM28.6 4.3h1.5v8.3h-1.5zM24.6 6.2h6.4v1.2h-6.4zM24.6 9.2h6.4v1.2h-6.4zM33.4 4.3h1.5v8.3h-1.5zM36.6 4.3h1.5v8.3h-1.5zM32.6 6.2h6.4v1.2h-6.4zM32.6 9.2h6.4v1.2h-6.4zM41.4 4.3h1.5v8.3h-1.5zM44.6 4.3h1.5v8.3h-1.5zM40.6 6.2h6.4v1.2h-6.4zM40.6 9.2h6.4v1.2h-6.4zM49.4 4.3h1.5v8.3h-1.5zM52.6 4.3h1.5v8.3h-1.5zM48.6 6.2h6.4v1.2h-6.4zM48.6 9.2h6.4v1.2h-6.4zM57.4 4.3h1.5v8.3h-1.5zM60.6 4.3h1.5v8.3h-1.5zM56.6 6.2h6.4v1.2h-6.4zM56.6 9.2h6.4v1.2h-6.4zM65.4 4.3h1.5v8.3h-1.5zM68.6 4.3h1.5v8.3h-1.5zM64.6 6.2h6.4v1.2h-6.4zM64.6 9.2h6.4v1.2h-6.4zM73.4 4.3h1.5v8.3h-1.5zM76.6 4.3h1.5v8.3h-1.5zM72.6 6.2h6.4v1.2h-6.4zM72.6 9.2h6.4v1.2h-6.4zM81.4 4.3h1.5v8.3h-1.5zM84.6 4.3h1.5v8.3h-1.5zM80.6 6.2h6.4v1.2h-6.4zM80.6 9.2h6.4v1.2h-6.4zM89.4 4.3h1.5v8.3h-1.5zM92.6 4.3h1.5v8.3h-1.5zM88.6 6.2h6.4v1.2h-6.4zM88.6 9.2h6.4v1.2h-6.4zM97.4 4.3h1.5v8.3h-1.5zM100.6 4.3h1.5v8.3h-1.5zM96.6 6.2h6.4v1.2h-6.4zM96.6 9.2h6.4v1.2h-6.4zM105.4 4.3h1.5v8.3h-1.5zM108.6 4.3h1.5v8.3h-1.5zM104.6 6.2h6.4v1.2h-6.4zM104.6 9.2h6.4v1.2h-6.4zM113.4 4.3h1.5v8.3h-1.5zM116.6 4.3h1.5v8.3h-1.5zM112.6 6.2h6.4v1.2h-6.4zM112.6 9.2h6.4v1.2h-6.4zM121.4 4.3h1.5v8.3h-1.5zM124.6 4.3h1.5v8.3h-1.5zM120.6 6.2h6.4v1.2h-6.4zM120.6 9.2h6.4v1.2h-6.4zM129.4 4.3h1.5v8.3h-1.5zM132.6 4.3h1.5v8.3h-1.5zM128.6 6.2h6.4v1.2h-6.4zM128.6 9.2h6.4v1.2h-6.4zM137.4 4.3h1.5v8.3h-1.5zM140.6 4.3h1.5v8.3h-1.5zM136.6 6.2h6.4v1.2h-6.4zM136.6 9.2h6.4v1.2h-6.4zM145.4 4.3h1.5v8.3h-1.5zM148.6 4.3h1.5v8.3h-1.5zM144.6 6.2h6.4v1.2h-6.4zM144.6 9.2h6.4v1.2h-6.4zM153.4 4.3h1.5v8.3h-1.5zM156.6 4.3h1.5v8.3h-1.5zM152.6 6.2h6.4v1.2h-6.4zM152.6 9.2h6.4v1.2h-6.4zM161.4 4.3h1.5v8.3h-1.5zM164.6 4.3h1.5v8.3h-1.5zM160.6 6.2h6.4v1.2h-6.4zM160.6 9.2h6.4v1.2h-6.4zM169.4 4.3h1.5v8.3h-1.5zM172.6 4.3h1.5v8.3h-1.5zM168.6 6.2h6.4v1.2h-6.4zM168.6 9.2h6.4v1.2h-6.4zM177.4 4.3h1.5v8.3h-1.5zM180.6 4.3h1.5v8.3h-1.5zM176.6 6.2h6.4v1.2h-6.4zM176.6 9.2h6.4v1.2h-6.4zM185.4 4.3h1.5v8.3h-1.5zM188.6 4.3h1.5v8.3h-1.5zM184.6 6.2h6.4v1.2h-6.4zM184.6 9.2h6.4v1.2h-6.4zM193.4 4.3h1.5v8.3h-1.5zM196.6 4.3h1.5v8.3h-1.5zM192.6 6.2h6.4v1.2h-6.4zM192.6 9.2h6.4v1.2h-6.4zM201.4 4.3h1.5v8.3h-1.5zM204.6 4.3h1.5v8.3h-1.5zM200.6 6.2h6.4v1.2h-6.4zM200.6 9.2h6.4v1.2h-6.4zM209.4 4.3h1.5v8.3h-1.5zM212.6 4.3h1.5v8.3h-1.5zM208.6 6.2h6.4v1.2h-6.4zM208.6 9.2h6.4v1.2h-6.4zM217.4 4.3h1.5v8.3h-1.5zM220.6 4.3h1.5v8.3h-1.5zM216.6 6.2h6.4v1.2h-6.4zM216.6 9.2h6.4v1.2h-6.4zM225.4 4.3h1.5v8.3h-1.5zM228.6 4.3h1.5v8.3h-1.5zM224.6 6.2h6.4v1.2h-6.4zM224.6 9.2h6.4v1.2h-6.4zM233.4 4.3h1.5v8.3h-1.5zM236.6 4.3h1.5v8.3h-1.5zM232.6 6.2h6.4v1.2h-6.4zM232.6 9.2h6.4v1.2h-6.4zM241.4 4.3h1.5v8.3h-1.5zM244.6 4.3h1.5v8.3h-1.5zM240.6 6.2h6.4v1.2h-6.4zM240.6 9.2h6.4v1.2h-6.4zM249.4 4.3h1.5v8.3h-1.5zM252.6 4.3h1.5v8.3h-1.5zM248.6 6.2h6.4v1.2h-6.4zM248.6 9.2h6.4v1.2h-6.4zM257.4 4.3h1.5v8.3h-1.5zM260.6 4.3h1.5v8.3h-1.5zM256.6 6.2h6.4v1.2h-6.4zM256.6 9.2h6.4v1.2h-6.4zM265.4 4.3h1.5v8.3h-1.5zM268.6 4.3h1.5v8.3h-1.5zM264.6 6.2h6.4v1.2h-6.4zM264.6 9.2h6.4v1.2h-6.4zM273.4 4.3h1.5v8.3h-1.5zM276.6 4.3h1.5v8.3h-1.5zM272.6 6.2h6.4v1.2h-6.4zM272.6 9.2h6.4v1.2h-6.4zM281.4 4.3h1.5v8.3h-1.5zM284.6 4.3h1.5v8.3h-1.5zM280.6 6.2h6.4v1.2h-6.4zM280.6 9.2h6.4v1.2h-6.4zM289.4 4.3h1.5v8.3h-1.5zM292.6 4.3h1.5v8.3h-1.5zM288.6 6.2h6.4v1.2h-6.4zM288.6 9.2h6.4v1.2h-6.4zM297.4 4.3h1.5v8.3h-1.5zM300.6 4.3h1.5v8.3h-1.5zM296.6 6.2h6.4v1.2h-6.4zM296.6 9.2h6.4v1.2h-6.4zM305.4 4.3h1.5v8.3h-1.5zM308.6 4.3h1.5v8.3h-1.5zM304.6 6.2h6.4v1.2h-6.4zM304.6 9.2h6.4v1.2h-6.4zM313.4 4.3h1.5v8.3h-1.5zM316.6 4.3h1.5v8.3h-1.5zM312.6 6.2h6.4v1.2h-6.4zM312.6 9.2h6.4v1.2h-6.4zM321.4 4.3h1.5v8.3h-1.5zM324.6 4.3h1.5v8.3h-1.5zM320.6 6.2h6.4v1.2h-6.4zM320.6 9.2h6.4v1.2h-6.4zM329.4 4.3h1.5v8.3h-1.5zM332.6 4.3h1.5v8.3h-1.5zM328.6 6.2h6.4v1.2h-6.4zM328.6 9.2h6.4v1.2h-6.4z" fill="#14bcbc"/></svg>
<span class="t" style="left:1149px;top:43px;color:#4b525a;">¬</span>
<div class="b" style="left:781px;top:59px;width:32px;background:#3a3a3a;"></div>
<span class="t" style="left:781px;top:60px;color:#8a8a8a;">  2</span>
<svg class="s" style="left:813px;top:59px" width="24" height="17" viewBox="0 0 24 17"><path d="M1.4 4.3h1.5v8.3h-1.5zM4.6 4.3h1.5v8.3h-1.5zM0.6 6.2h6.4v1.2h-6.4zM0.6 9.2h6.4v1.2h-6.4zM9.4 4.3h1.5v8.3h-1.5zM12.6 4.3h1.5v8.3h-1.5zM8.6 6.2h6.4v1.2h-6.4zM8.6 9.2h6.4v1.2h-6.4zM17.4 4.3h1.5v8.3h-1.5zM20.6 4.3h1.5v8.3h-1.5zM16.6 6.2h6.4v1.2h-6.4zM16.6 9.2h6.4v1.2h-6.4z" fill="#14bcbc"/></svg>
<span class="t" style="left:837px;top:60px;color:#4b525a;">·</span>
<span class="t" style="left:845px;top:60px;color:#14bcbc;">Defaults.</span>
<span class="t" style="left:917px;top:60px;color:#4b525a;">¬</span>
<div class="b" style="left:781px;top:76px;width:32px;background:#3a3a3a;"></div>
<span class="t" style="left:781px;top:77px;color:#8a8a8a;">  3</span>
<svg class="s" style="left:813px;top:76px" width="336" height="17" viewBox="0 0 336 17"><path d="M1.4 4.3h1.5v8.3h-1.5zM4.6 4.3h1.5v8.3h-1.5zM0.6 6.2h6.4v1.2h-6.4zM0.6 9.2h6.4v1.2h-6.4zM9.4 4.3h1.5v8.3h-1.5zM12.6 4.3h1.5v8.3h-1.5zM8.6 6.2h6.4v1.2h-6.4zM8.6 9.2h6.4v1.2h-6.4zM17.4 4.3h1.5v8.3h-1.5zM20.6 4.3h1.5v8.3h-1.5zM16.6 6.2h6.4v1.2h-6.4zM16.6 9.2h6.4v1.2h-6.4zM25.4 4.3h1.5v8.3h-1.5zM28.6 4.3h1.5v8.3h-1.5zM24.6 6.2h6.4v1.2h-6.4zM24.6 9.2h6.4v1.2h-6.4zM33.4 4.3h1.5v8.3h-1.5zM36.6 4.3h1.5v8.3h-1.5zM32.6 6.2h6.4v1.2h-6.4zM32.6 9.2h6.4v1.2h-6.4zM41.4 4.3h1.5v8.3h-1.5zM44.6 4.3h1.5v8.3h-1.5zM40.6 6.2h6.4v1.2h-6.4zM40.6 9.2h6.4v1.2h-6.4zM49.4 4.3h1.5v8.3h-1.5zM52.6 4.3h1.5v8.3h-1.5zM48.6 6.2h6.4v1.2h-6.4zM48.6 9.2h6.4v1.2h-6.4zM57.4 4.3h1.5v8.3h-1.5zM60.6 4.3h1.5v8.3h-1.5zM56.6 6.2h6.4v1.2h-6.4zM56.6 9.2h6.4v1.2h-6.4zM65.4 4.3h1.5v8.3h-1.5zM68.6 4.3h1.5v8.3h-1.5zM64.6 6.2h6.4v1.2h-6.4zM64.6 9.2h6.4v1.2h-6.4zM73.4 4.3h1.5v8.3h-1.5zM76.6 4.3h1.5v8.3h-1.5zM72.6 6.2h6.4v1.2h-6.4zM72.6 9.2h6.4v1.2h-6.4zM81.4 4.3h1.5v8.3h-1.5zM84.6 4.3h1.5v8.3h-1.5zM80.6 6.2h6.4v1.2h-6.4zM80.6 9.2h6.4v1.2h-6.4zM89.4 4.3h1.5v8.3h-1.5zM92.6 4.3h1.5v8.3h-1.5zM88.6 6.2h6.4v1.2h-6.4zM88.6 9.2h6.4v1.2h-6.4zM97.4 4.3h1.5v8.3h-1.5zM100.6 4.3h1.5v8.3h-1.5zM96.6 6.2h6.4v1.2h-6.4zM96.6 9.2h6.4v1.2h-6.4zM105.4 4.3h1.5v8.3h-1.5zM108.6 4.3h1.5v8.3h-1.5zM104.6 6.2h6.4v1.2h-6.4zM104.6 9.2h6.4v1.2h-6.4zM113.4 4.3h1.5v8.3h-1.5zM116.6 4.3h1.5v8.3h-1.5zM112.6 6.2h6.4v1.2h-6.4zM112.6 9.2h6.4v1.2h-6.4zM121.4 4.3h1.5v8.3h-1.5zM124.6 4.3h1.5v8.3h-1.5zM120.6 6.2h6.4v1.2h-6.4zM120.6 9.2h6.4v1.2h-6.4zM129.4 4.3h1.5v8.3h-1.5zM132.6 4.3h1.5v8.3h-1.5zM128.6 6.2h6.4v1.2h-6.4zM128.6 9.2h6.4v1.2h-6.4zM137.4 4.3h1.5v8.3h-1.5zM140.6 4.3h1.5v8.3h-1.5zM136.6 6.2h6.4v1.2h-6.4zM136.6 9.2h6.4v1.2h-6.4zM145.4 4.3h1.5v8.3h-1.5zM148.6 4.3h1.5v8.3h-1.5zM144.6 6.2h6.4v1.2h-6.4zM144.6 9.2h6.4v1.2h-6.4zM153.4 4.3h1.5v8.3h-1.5zM156.6 4.3h1.5v8.3h-1.5zM152.6 6.2h6.4v1.2h-6.4zM152.6 9.2h6.4v1.2h-6.4zM161.4 4.3h1.5v8.3h-1.5zM164.6 4.3h1.5v8.3h-1.5zM160.6 6.2h6.4v1.2h-6.4zM160.6 9.2h6.4v1.2h-6.4zM169.4 4.3h1.5v8.3h-1.5zM172.6 4.3h1.5v8.3h-1.5zM168.6 6.2h6.4v1.2h-6.4zM168.6 9.2h6.4v1.2h-6.4zM177.4 4.3h1.5v8.3h-1.5zM180.6 4.3h1.5v8.3h-1.5zM176.6 6.2h6.4v1.2h-6.4zM176.6 9.2h6.4v1.2h-6.4zM185.4 4.3h1.5v8.3h-1.5zM188.6 4.3h1.5v8.3h-1.5zM184.6 6.2h6.4v1.2h-6.4zM184.6 9.2h6.4v1.2h-6.4zM193.4 4.3h1.5v8.3h-1.5zM196.6 4.3h1.5v8.3h-1.5zM192.6 6.2h6.4v1.2h-6.4zM192.6 9.2h6.4v1.2h-6.4zM201.4 4.3h1.5v8.3h-1.5zM204.6 4.3h1.5v8.3h-1.5zM200.6 6.2h6.4v1.2h-6.4zM200.6 9.2h6.4v1.2h-6.4zM209.4 4.3h1.5v8.3h-1.5zM212.6 4.3h1.5v8.3h-1.5zM208.6 6.2h6.4v1.2h-6.4zM208.6 9.2h6.4v1.2h-6.4zM217.4 4.3h1.5v8.3h-1.5zM220.6 4.3h1.5v8.3h-1.5zM216.6 6.2h6.4v1.2h-6.4zM216.6 9.2h6.4v1.2h-6.4zM225.4 4.3h1.5v8.3h-1.5zM228.6 4.3h1.5v8.3h-1.5zM224.6 6.2h6.4v1.2h-6.4zM224.6 9.2h6.4v1.2h-6.4zM233.4 4.3h1.5v8.3h-1.5zM236.6 4.3h1.5v8.3h-1.5zM232.6 6.2h6.4v1.2h-6.4zM232.6 9.2h6.4v1.2h-6.4zM241.4 4.3h1.5v8.3h-1.5zM244.6 4.3h1.5v8.3h-1.5zM240.6 6.2h6.4v1.2h-6.4zM240.6 9.2h6.4v1.2h-6.4zM249.4 4.3h1.5v8.3h-1.5zM252.6 4.3h1.5v8.3h-1.5zM248.6 6.2h6.4v1.2h-6.4zM248.6 9.2h6.4v1.2h-6.4zM257.4 4.3h1.5v8.3h-1.5zM260.6 4.3h1.5v8.3h-1.5zM256.6 6.2h6.4v1.2h-6.4zM256.6 9.2h6.4v1.2h-6.4zM265.4 4.3h1.5v8.3h-1.5zM268.6 4.3h1.5v8.3h-1.5zM264.6 6.2h6.4v1.2h-6.4zM264.6 9.2h6.4v1.2h-6.4zM273.4 4.3h1.5v8.3h-1.5zM276.6 4.3h1.5v8.3h-1.5zM272.6 6.2h6.4v1.2h-6.4zM272.6 9.2h6.4v1.2h-6.4zM281.4 4.3h1.5v8.3h-1.5zM284.6 4.3h1.5v8.3h-1.5zM280.6 6.2h6.4v1.2h-6.4zM280.6 9.2h6.4v1.2h-6.4zM289.4 4.3h1.5v8.3h-1.5zM292.6 4.3h1.5v8.3h-1.5zM288.6 6.2h6.4v1.2h-6.4zM288.6 9.2h6.4v1.2h-6.4zM297.4 4.3h1.5v8.3h-1.5zM300.6 4.3h1.5v8.3h-1.5zM296.6 6.2h6.4v1.2h-6.4zM296.6 9.2h6.4v1.2h-6.4zM305.4 4.3h1.5v8.3h-1.5zM308.6 4.3h1.5v8.3h-1.5zM304.6 6.2h6.4v1.2h-6.4zM304.6 9.2h6.4v1.2h-6.4zM313.4 4.3h1.5v8.3h-1.5zM316.6 4.3h1.5v8.3h-1.5zM312.6 6.2h6.4v1.2h-6.4zM312.6 9.2h6.4v1.2h-6.4zM321.4 4.3h1.5v8.3h-1.5zM324.6 4.3h1.5v8.3h-1.5zM320.6 6.2h6.4v1.2h-6.4zM320.6 9.2h6.4v1.2h-6.4zM329.4 4.3h1.5v8.3h-1.5zM332.6 4.3h1.5v8.3h-1.5zM328.6 6.2h6.4v1.2h-6.4zM328.6 9.2h6.4v1.2h-6.4z" fill="#14bcbc"/></svg>
<span class="t" style="left:1149px;top:77px;color:#4b525a;">¬</span>
<div class="b" style="left:781px;top:93px;width:32px;background:#3a3a3a;"></div>
<span class="t" style="left:781px;top:94px;color:#8a8a8a;">  4</span>
<span class="t" style="left:813px;top:94px;color:#4b525a;">¬</span>
<div class="b" style="left:781px;top:110px;width:32px;background:#3a3a3a;"></div>
<span class="t" style="left:781px;top:111px;color:#8a8a8a;">  5</span>
<svg class="s" style="left:813px;top:110px" width="8" height="17" viewBox="0 0 8 17"><path d="M1.4 4.3h1.5v8.3h-1.5zM4.6 4.3h1.5v8.3h-1.5zM0.6 6.2h6.4v1.2h-6.4zM0.6 9.2h6.4v1.2h-6.4z" fill="#14bcbc"/></svg>
<span class="t" style="left:821px;top:111px;color:#4b525a;">·</span>
<span class="t" style="left:829px;top:111px;color:#14bcbc;">bind</span>
<span class="t" style="left:861px;top:111px;color:#4b525a;">·</span>
<span class="t" style="left:869px;top:111px;color:#14bcbc;">ctrl+a</span>
<span class="t" style="left:917px;top:111px;color:#4b525a;">·</span>
<span class="t" style="left:925px;top:111px;color:#14bcbc;">to</span>
<span class="t" style="left:941px;top:111px;color:#4b525a;">·</span>
<span class="t" style="left:949px;top:111px;color:#14bcbc;">tmux</span>
<span class="t" style="left:981px;top:111px;color:#4b525a;">·</span>
<span class="t" style="left:989px;top:111px;color:#14bcbc;">prefix.</span>
<span class="t" style="left:1045px;top:111px;color:#4b525a;">¬</span>
<div class="b" style="left:781px;top:127px;width:32px;background:#3a3a3a;"></div>
<span class="t" style="left:781px;top:128px;color:#8a8a8a;">  6</span>
<span class="t" style="left:813px;top:128px;color:#50d63a;">unbind</span>
<span class="t" style="left:861px;top:128px;color:#4b525a;">·</span>
<span class="t" style="left:869px;top:128px;color:#ee386e;">C-b</span>
<span class="t" style="left:893px;top:128px;color:#4b525a;">¬</span>
<div class="b" style="left:781px;top:144px;width:32px;background:#3a3a3a;"></div>
<span class="t" style="left:781px;top:145px;color:#8a8a8a;">  7</span>
<span class="t" style="left:813px;top:145px;color:#50d63a;">set</span>
<span class="t" style="left:837px;top:145px;color:#4b525a;">·</span>
<span class="t" style="left:845px;top:145px;color:#f2d42e;">-g</span>
<span class="t" style="left:861px;top:145px;color:#4b525a;">·</span>
<span class="t" style="left:869px;top:145px;color:#ee386e;">prefix</span>
<span class="t" style="left:917px;top:145px;color:#4b525a;">·</span>
<span class="t" style="left:925px;top:145px;color:#ee386e;">C-a</span>
<span class="t" style="left:949px;top:145px;color:#4b525a;">¬</span>
<div class="b" style="left:781px;top:161px;width:32px;background:#3a3a3a;"></div>
<span class="t" style="left:781px;top:162px;color:#8a8a8a;">  8</span>
<span class="t" style="left:813px;top:162px;color:#50d63a;">bind</span>
<span class="t" style="left:845px;top:162px;color:#4b525a;">·</span>
<span class="t" style="left:853px;top:162px;color:#ee386e;">C-a</span>
<span class="t" style="left:877px;top:162px;color:#4b525a;">·</span>
<span class="t" style="left:885px;top:162px;color:#f2d42e;">send-prefix</span>
<span class="t" style="left:973px;top:162px;color:#4b525a;">¬</span>
<div class="b" style="left:781px;top:178px;width:32px;background:#3a3a3a;"></div>
<span class="t" style="left:781px;top:179px;color:#8a8a8a;">  9</span>
<span class="t" style="left:813px;top:179px;color:#4b525a;">¬</span>
<div class="b" style="left:781px;top:195px;width:32px;background:#3a3a3a;"></div>
<span class="t" style="left:781px;top:196px;color:#8a8a8a;"> 10</span>
<svg class="s" style="left:813px;top:195px" width="8" height="17" viewBox="0 0 8 17"><path d="M1.4 4.3h1.5v8.3h-1.5zM4.6 4.3h1.5v8.3h-1.5zM0.6 6.2h6.4v1.2h-6.4zM0.6 9.2h6.4v1.2h-6.4z" fill="#14bcbc"/></svg>
<span class="t" style="left:821px;top:196px;color:#4b525a;">·</span>
<span class="t" style="left:829px;top:196px;color:#14bcbc;">terminal</span>
<span class="t" style="left:893px;top:196px;color:#4b525a;">·</span>
<span class="t" style="left:901px;top:196px;color:#14bcbc;">mode</span>
<span class="t" style="left:933px;top:196px;color:#4b525a;">¬</span>
<div class="b" style="left:781px;top:212px;width:32px;background:#3a3a3a;"></div>
<span class="t" style="left:781px;top:213px;color:#8a8a8a;"> 11</span>
<span class="t" style="left:813px;top:213px;color:#50d63a;">set</span>
<span class="t" style="left:837px;top:213px;color:#4b525a;">·</span>
<span class="t" style="left:845px;top:213px;color:#f2d42e;">-g</span>
<span class="t" style="left:861px;top:213px;color:#4b525a;">·</span>
<span class="t" style="left:869px;top:213px;color:#ee386e;">default-terminal</span>
<span class="t" style="left:997px;top:213px;color:#4b525a;">·</span>
<span class="t" style="left:1005px;top:213px;color:#ee386e;">&quot;</span>
<span class="t" style="left:1013px;top:213px;color:#b86f2a;">screen-256color</span>
<span class="t" style="left:1133px;top:213px;color:#ee386e;">&quot;</span>
<span class="t" style="left:1141px;top:213px;color:#4b525a;">¬</span>
<div class="b" style="left:813px;top:229px;width:768px;background:#3a3a3a;"></div>
<span class="t" style="left:781px;top:230px;color:#f2d42e;font-weight:bold;"> 12</span>
<span class="t" style="left:813px;top:230px;color:#ffffff;">¬</span>
<div class="b" style="left:781px;top:246px;width:32px;background:#3a3a3a;"></div>
<span class="t" style="left:781px;top:247px;color:#8a8a8a;"> 13</span>
<svg class="s" style="left:813px;top:246px" width="8" height="17" viewBox="0 0 8 17"><path d="M1.4 4.3h1.5v8.3h-1.5zM4.6 4.3h1.5v8.3h-1.5zM0.6 6.2h6.4v1.2h-6.4zM0.6 9.2h6.4v1.2h-6.4z" fill="#14bcbc"/></svg>
<span class="t" style="left:821px;top:247px;color:#4b525a;">·</span>
<span class="t" style="left:829px;top:247px;color:#14bcbc;">don&#x27;t</span>
<span class="t" style="left:869px;top:247px;color:#4b525a;">·</span>
<span class="t" style="left:877px;top:247px;color:#14bcbc;">detach</span>
<span class="t" style="left:925px;top:247px;color:#4b525a;">·</span>
<span class="t" style="left:933px;top:247px;color:#14bcbc;">tmux</span>
<span class="t" style="left:965px;top:247px;color:#4b525a;">·</span>
<span class="t" style="left:973px;top:247px;color:#14bcbc;">when</span>
<span class="t" style="left:1005px;top:247px;color:#4b525a;">·</span>
<span class="t" style="left:1013px;top:247px;color:#14bcbc;">killing</span>
<span class="t" style="left:1069px;top:247px;color:#4b525a;">·</span>
<span class="t" style="left:1077px;top:247px;color:#14bcbc;">a</span>
<span class="t" style="left:1085px;top:247px;color:#4b525a;">·</span>
<span class="t" style="left:1093px;top:247px;color:#14bcbc;">session</span>
<span class="t" style="left:1149px;top:247px;color:#4b525a;">¬</span>
<div class="b" style="left:781px;top:263px;width:32px;background:#3a3a3a;"></div>
<span class="t" style="left:781px;top:264px;color:#8a8a8a;"> 14</span>
<span class="t" style="left:813px;top:264px;color:#50d63a;">set-option</span>
<span class="t" style="left:893px;top:264px;color:#4b525a;">·</span>
<span class="t" style="left:901px;top:264px;color:#f2d42e;">-g</span>
<span class="t" style="left:917px;top:264px;color:#4b525a;">·</span>
<span class="t" style="left:925px;top:264px;color:#ee386e;">detach-on-destroy</span>
<span class="t" style="left:1061px;top:264px;color:#4b525a;">·</span>
<span class="t" style="left:1069px;top:264px;color:#b86f2a;">off</span>
<span class="t" style="left:1093px;top:264px;color:#4b525a;">¬</span>
<div class="b" style="left:781px;top:280px;width:32px;background:#3a3a3a;"></div>
<span class="t" style="left:781px;top:281px;color:#8a8a8a;"> 15</span>
<span class="t" style="left:813px;top:281px;color:#4b525a;">¬</span>
<div class="b" style="left:781px;top:297px;width:32px;background:#3a3a3a;"></div>
<span class="t" style="left:781px;top:298px;color:#8a8a8a;"> 16</span>
<svg class="s" style="left:813px;top:297px" width="8" height="17" viewBox="0 0 8 17"><path d="M1.4 4.3h1.5v8.3h-1.5zM4.6 4.3h1.5v8.3h-1.5zM0.6 6.2h6.4v1.2h-6.4zM0.6 9.2h6.4v1.2h-6.4z" fill="#14bcbc"/></svg>
<span class="t" style="left:821px;top:298px;color:#4b525a;">·</span>
<span class="t" style="left:829px;top:298px;color:#14bcbc;">Scroll</span>
<span class="t" style="left:877px;top:298px;color:#4b525a;">·</span>
<span class="t" style="left:885px;top:298px;color:#14bcbc;">History</span>
<span class="t" style="left:941px;top:298px;color:#4b525a;">¬</span>
<div class="b" style="left:781px;top:314px;width:32px;background:#3a3a3a;"></div>
<span class="t" style="left:781px;top:315px;color:#8a8a8a;"> 17</span>
<span class="t" style="left:813px;top:315px;color:#50d63a;">set-option</span>
<span class="t" style="left:893px;top:315px;color:#4b525a;">·</span>
<span class="t" style="left:901px;top:315px;color:#f2d42e;">-g</span>
<span class="t" style="left:917px;top:315px;color:#4b525a;">·</span>
<span class="t" style="left:925px;top:315px;color:#ee386e;">history-limit</span>
<span class="t" style="left:1029px;top:315px;color:#4b525a;">·</span>
<span class="t" style="left:1037px;top:315px;color:#b86f2a;">10000</span>
<span class="t" style="left:1077px;top:315px;color:#4b525a;">¬</span>
<div class="b" style="left:781px;top:331px;width:32px;background:#3a3a3a;"></div>
<span class="t" style="left:781px;top:332px;color:#8a8a8a;"> 18</span>
<span class="t" style="left:813px;top:332px;color:#4b525a;">¬</span>
<div class="b" style="left:781px;top:348px;width:32px;background:#3a3a3a;"></div>
<span class="t" style="left:781px;top:349px;color:#8a8a8a;"> 19</span>
<svg class="s" style="left:813px;top:348px" width="8" height="17" viewBox="0 0 8 17"><path d="M1.4 4.3h1.5v8.3h-1.5zM4.6 4.3h1.5v8.3h-1.5zM0.6 6.2h6.4v1.2h-6.4zM0.6 9.2h6.4v1.2h-6.4z" fill="#14bcbc"/></svg>
<span class="t" style="left:821px;top:349px;color:#4b525a;">·</span>
<span class="t" style="left:829px;top:349px;color:#14bcbc;">keep</span>
<span class="t" style="left:861px;top:349px;color:#4b525a;">·</span>
<span class="t" style="left:869px;top:349px;color:#14bcbc;">tmux</span>
<span class="t" style="left:901px;top:349px;color:#4b525a;">·</span>
<span class="t" style="left:909px;top:349px;color:#14bcbc;">msgs</span>
<span class="t" style="left:941px;top:349px;color:#4b525a;">·</span>
<span class="t" style="left:949px;top:349px;color:#14bcbc;">around</span>
<span class="t" style="left:997px;top:349px;color:#4b525a;">·</span>
<span class="t" style="left:1005px;top:349px;color:#14bcbc;">longer</span>
<span class="t" style="left:1053px;top:349px;color:#4b525a;">¬</span>
<div class="b" style="left:781px;top:365px;width:32px;background:#3a3a3a;"></div>
<span class="t" style="left:781px;top:366px;color:#8a8a8a;"> 20</span>
<span class="t" style="left:813px;top:366px;color:#50d63a;">set</span>
<span class="t" style="left:837px;top:366px;color:#4b525a;">·</span>
<span class="t" style="left:845px;top:366px;color:#f2d42e;">-g</span>
<span class="t" style="left:861px;top:366px;color:#4b525a;">·</span>
<span class="t" style="left:869px;top:366px;color:#ee386e;">display-time</span>
<span class="t" style="left:965px;top:366px;color:#4b525a;">·</span>
<span class="t" style="left:973px;top:366px;color:#b86f2a;">2000</span>
<span class="t" style="left:1005px;top:366px;color:#4b525a;">¬</span>
<div class="b" style="left:781px;top:382px;width:32px;background:#3a3a3a;"></div>
<span class="t" style="left:781px;top:383px;color:#8a8a8a;"> 21</span>
<span class="t" style="left:813px;top:383px;color:#4b525a;">¬</span>
<div class="b" style="left:781px;top:399px;width:32px;background:#3a3a3a;"></div>
<span class="t" style="left:781px;top:400px;color:#8a8a8a;"> 22</span>
<svg class="s" style="left:813px;top:399px" width="8" height="17" viewBox="0 0 8 17"><path d="M1.4 4.3h1.5v8.3h-1.5zM4.6 4.3h1.5v8.3h-1.5zM0.6 6.2h6.4v1.2h-6.4zM0.6 9.2h6.4v1.2h-6.4z" fill="#14bcbc"/></svg>
<span class="t" style="left:821px;top:400px;color:#4b525a;">·</span>
<span class="t" style="left:829px;top:400px;color:#14bcbc;">Set</span>
<span class="t" style="left:853px;top:400px;color:#4b525a;">·</span>
<span class="t" style="left:861px;top:400px;color:#14bcbc;">ability</span>
<span class="t" style="left:917px;top:400px;color:#4b525a;">·</span>
<span class="t" style="left:925px;top:400px;color:#14bcbc;">to</span>
<span class="t" style="left:941px;top:400px;color:#4b525a;">·</span>
<span class="t" style="left:949px;top:400px;color:#14bcbc;">capture</span>
<span class="t" style="left:1005px;top:400px;color:#4b525a;">·</span>
<span class="t" style="left:1013px;top:400px;color:#14bcbc;">on</span>
<span class="t" style="left:1029px;top:400px;color:#4b525a;">·</span>
<span class="t" style="left:1037px;top:400px;color:#14bcbc;">start</span>
<span class="t" style="left:1077px;top:400px;color:#4b525a;">·</span>
<span class="t" style="left:1085px;top:400px;color:#14bcbc;">and</span>
<span class="t" style="left:1109px;top:400px;color:#4b525a;">·</span>
<span class="t" style="left:1117px;top:400px;color:#14bcbc;">restore</span>
<span class="t" style="left:1173px;top:400px;color:#4b525a;">·</span>
<span class="t" style="left:1181px;top:400px;color:#14bcbc;">on</span>
<span class="t" style="left:1197px;top:400px;color:#4b525a;">·</span>
<span class="t" style="left:1205px;top:400px;color:#14bcbc;">exit</span>
<span class="t" style="left:1237px;top:400px;color:#4b525a;">·</span>
<span class="t" style="left:1245px;top:400px;color:#14bcbc;">window</span>
<span class="t" style="left:1293px;top:400px;color:#4b525a;">·</span>
<span class="t" style="left:1301px;top:400px;color:#14bcbc;">data</span>
<span class="t" style="left:1333px;top:400px;color:#4b525a;">·</span>
<span class="t" style="left:1341px;top:400px;color:#14bcbc;">when</span>
<span class="t" style="left:1373px;top:400px;color:#4b525a;">·</span>
<span class="t" style="left:1381px;top:400px;color:#14bcbc;">running</span>
<span class="t" style="left:1437px;top:400px;color:#4b525a;">·</span>
<span class="t" style="left:1445px;top:400px;color:#14bcbc;">an</span>
<span class="t" style="left:1461px;top:400px;color:#4b525a;">·</span>
<span class="t" style="left:1469px;top:400px;color:#14bcbc;">application</span>
<span class="t" style="left:1557px;top:400px;color:#4b525a;">¬</span>
<div class="b" style="left:781px;top:416px;width:32px;background:#3a3a3a;"></div>
<span class="t" style="left:781px;top:417px;color:#8a8a8a;"> 23</span>
<span class="t" style="left:813px;top:417px;color:#50d63a;">setw</span>
<span class="t" style="left:845px;top:417px;color:#4b525a;">·</span>
<span class="t" style="left:853px;top:417px;color:#f2d42e;">-g</span>
<span class="t" style="left:869px;top:417px;color:#4b525a;">·</span>
<span class="t" style="left:877px;top:417px;color:#ee386e;">alternate-screen</span>
<span class="t" style="left:1005px;top:417px;color:#4b525a;">·</span>
<span class="t" style="left:1013px;top:417px;color:#b86f2a;">on</span>
<span class="t" style="left:1029px;top:417px;color:#4b525a;">¬</span>
<div class="b" style="left:781px;top:433px;width:32px;background:#3a3a3a;"></div>
<span class="t" style="left:781px;top:434px;color:#8a8a8a;"> 24</span>
<span class="t" style="left:813px;top:434px;color:#4b525a;">¬</span>
<div class="b" style="left:781px;top:450px;width:32px;background:#3a3a3a;"></div>
<span class="t" style="left:781px;top:451px;color:#8a8a8a;"> 25</span>
<svg class="s" style="left:813px;top:450px" width="8" height="17" viewBox="0 0 8 17"><path d="M1.4 4.3h1.5v8.3h-1.5zM4.6 4.3h1.5v8.3h-1.5zM0.6 6.2h6.4v1.2h-6.4zM0.6 9.2h6.4v1.2h-6.4z" fill="#14bcbc"/></svg>
<span class="t" style="left:821px;top:451px;color:#4b525a;">·</span>
<span class="t" style="left:829px;top:451px;color:#14bcbc;">Lower</span>
<span class="t" style="left:869px;top:451px;color:#4b525a;">·</span>
<span class="t" style="left:877px;top:451px;color:#14bcbc;">escape</span>
<span class="t" style="left:925px;top:451px;color:#4b525a;">·</span>
<span class="t" style="left:933px;top:451px;color:#14bcbc;">timing</span>
<span class="t" style="left:981px;top:451px;color:#4b525a;">·</span>
<span class="t" style="left:989px;top:451px;color:#14bcbc;">from</span>
<span class="t" style="left:1021px;top:451px;color:#4b525a;">·</span>
<span class="t" style="left:1029px;top:451px;color:#14bcbc;">500ms</span>
<span class="t" style="left:1069px;top:451px;color:#4b525a;">·</span>
<span class="t" style="left:1077px;top:451px;color:#14bcbc;">to</span>
<span class="t" style="left:1093px;top:451px;color:#4b525a;">·</span>
<span class="t" style="left:1101px;top:451px;color:#14bcbc;">50ms</span>
<span class="t" style="left:1133px;top:451px;color:#4b525a;">·</span>
<span class="t" style="left:1141px;top:451px;color:#14bcbc;">for</span>
<span class="t" style="left:1165px;top:451px;color:#4b525a;">·</span>
<span class="t" style="left:1173px;top:451px;color:#14bcbc;">quicker</span>
<span class="t" style="left:1229px;top:451px;color:#4b525a;">·</span>
<span class="t" style="left:1237px;top:451px;color:#14bcbc;">response</span>
<span class="t" style="left:1301px;top:451px;color:#4b525a;">·</span>
<span class="t" style="left:1309px;top:451px;color:#14bcbc;">to</span>
<span class="t" style="left:1325px;top:451px;color:#4b525a;">·</span>
<span class="t" style="left:1333px;top:451px;color:#14bcbc;">scroll-buffer</span>
<span class="t" style="left:1437px;top:451px;color:#4b525a;">·</span>
<span class="t" style="left:1445px;top:451px;color:#14bcbc;">access.</span>
<span class="t" style="left:1501px;top:451px;color:#4b525a;">¬</span>
<div class="b" style="left:781px;top:467px;width:32px;background:#3a3a3a;"></div>
<span class="t" style="left:781px;top:468px;color:#8a8a8a;"> 26</span>
<span class="t" style="left:813px;top:468px;color:#50d63a;">set</span>
<span class="t" style="left:837px;top:468px;color:#4b525a;">·</span>
<span class="t" style="left:845px;top:468px;color:#f2d42e;">-s</span>
<span class="t" style="left:861px;top:468px;color:#4b525a;">·</span>
<span class="t" style="left:869px;top:468px;color:#ee386e;">escape-time</span>
<span class="t" style="left:957px;top:468px;color:#4b525a;">·</span>
<span class="t" style="left:965px;top:468px;color:#b86f2a;">50</span>
<span class="t" style="left:981px;top:468px;color:#4b525a;">¬</span>
<div class="b" style="left:781px;top:484px;width:32px;background:#3a3a3a;"></div>
<span class="t" style="left:781px;top:485px;color:#8a8a8a;"> 27</span>
<span class="t" style="left:813px;top:485px;color:#4b525a;">¬</span>
<div class="b" style="left:781px;top:501px;width:32px;background:#3a3a3a;"></div>
<span class="t" style="left:781px;top:502px;color:#8a8a8a;"> 28</span>
<svg class="s" style="left:813px;top:501px" width="8" height="17" viewBox="0 0 8 17"><path d="M1.4 4.3h1.5v8.3h-1.5zM4.6 4.3h1.5v8.3h-1.5zM0.6 6.2h6.4v1.2h-6.4zM0.6 9.2h6.4v1.2h-6.4z" fill="#14bcbc"/></svg>
<span class="t" style="left:821px;top:502px;color:#4b525a;">·</span>
<span class="t" style="left:829px;top:502px;color:#14bcbc;">loud</span>
<span class="t" style="left:861px;top:502px;color:#4b525a;">·</span>
<span class="t" style="left:869px;top:502px;color:#14bcbc;">or</span>
<span class="t" style="left:885px;top:502px;color:#4b525a;">·</span>
<span class="t" style="left:893px;top:502px;color:#14bcbc;">quiet?</span>
<span class="t" style="left:941px;top:502px;color:#4b525a;">¬</span>
<div class="b" style="left:781px;top:518px;width:32px;background:#3a3a3a;"></div>
<span class="t" style="left:781px;top:519px;color:#8a8a8a;"> 29</span>
<span class="t" style="left:813px;top:519px;color:#50d63a;">set-window-option</span>
<span class="t" style="left:949px;top:519px;color:#4b525a;">·</span>
<span class="t" style="left:957px;top:519px;color:#f2d42e;">-g</span>
<span class="t" style="left:973px;top:519px;color:#4b525a;">·</span>
<span class="t" style="left:981px;top:519px;color:#ee386e;">monitor-activity</span>
<span class="t" style="left:1109px;top:519px;color:#4b525a;">·</span>
<span class="t" style="left:1117px;top:519px;color:#b86f2a;">off</span>
<span class="t" style="left:1141px;top:519px;color:#4b525a;">¬</span>
<div class="b" style="left:781px;top:535px;width:32px;background:#3a3a3a;"></div>
<span class="t" style="left:781px;top:536px;color:#8a8a8a;"> 30</span>
<span class="t" style="left:813px;top:536px;color:#50d63a;">set-option</span>
<span class="t" style="left:893px;top:536px;color:#4b525a;">·</span>
<span class="t" style="left:901px;top:536px;color:#f2d42e;">-g</span>
<span class="t" style="left:917px;top:536px;color:#4b525a;">·</span>
<span class="t" style="left:925px;top:536px;color:#ee386e;">visual-activity</span>
<span class="t" style="left:1045px;top:536px;color:#4b525a;">·</span>
<span class="t" style="left:1053px;top:536px;color:#b86f2a;">off</span>
<span class="t" style="left:1077px;top:536px;color:#4b525a;">¬</span>
<div class="b" style="left:781px;top:552px;width:32px;background:#3a3a3a;"></div>
<span class="t" style="left:781px;top:553px;color:#8a8a8a;"> 31</span>
<span class="t" style="left:813px;top:553px;color:#50d63a;">set-option</span>
<span class="t" style="left:893px;top:553px;color:#4b525a;">·</span>
<span class="t" style="left:901px;top:553px;color:#f2d42e;">-g</span>
<span class="t" style="left:917px;top:553px;color:#4b525a;">·</span>
<span class="t" style="left:925px;top:553px;color:#ee386e;">visual-bell</span>
<span class="t" style="left:1013px;top:553px;color:#4b525a;">·</span>
<span class="t" style="left:1021px;top:553px;color:#b86f2a;">off</span>
<span class="t" style="left:1045px;top:553px;color:#4b525a;">¬</span>
<div class="b" style="left:781px;top:569px;width:32px;background:#3a3a3a;"></div>
<span class="t" style="left:781px;top:570px;color:#8a8a8a;"> 32</span>
<span class="t" style="left:813px;top:570px;color:#50d63a;">set-option</span>
<span class="t" style="left:893px;top:570px;color:#4b525a;">·</span>
<span class="t" style="left:901px;top:570px;color:#f2d42e;">-g</span>
<span class="t" style="left:917px;top:570px;color:#4b525a;">·</span>
<span class="t" style="left:925px;top:570px;color:#ee386e;">visual-silence</span>
<span class="t" style="left:1037px;top:570px;color:#4b525a;">·</span>
<span class="t" style="left:1045px;top:570px;color:#b86f2a;">off</span>
<span class="t" style="left:1069px;top:570px;color:#4b525a;">¬</span>
<div class="b" style="left:781px;top:586px;width:32px;background:#3a3a3a;"></div>
<span class="t" style="left:781px;top:587px;color:#8a8a8a;"> 33</span>
<span class="t" style="left:813px;top:587px;color:#50d63a;">set-option</span>
<span class="t" style="left:893px;top:587px;color:#4b525a;">·</span>
<span class="t" style="left:901px;top:587px;color:#f2d42e;">-g</span>
<span class="t" style="left:917px;top:587px;color:#4b525a;">·</span>
<span class="t" style="left:925px;top:587px;color:#ee386e;">bell-action</span>
<span class="t" style="left:1013px;top:587px;color:#4b525a;">·</span>
<span class="t" style="left:1021px;top:587px;color:#b86f2a;">none</span>
<span class="t" style="left:1053px;top:587px;color:#4b525a;">¬</span>
<div class="b" style="left:781px;top:603px;width:32px;background:#3a3a3a;"></div>
<span class="t" style="left:781px;top:604px;color:#8a8a8a;"> 34</span>
<span class="t" style="left:813px;top:604px;color:#4b525a;">¬</span>
<div class="b" style="left:781px;top:620px;width:32px;background:#3a3a3a;"></div>
<span class="t" style="left:781px;top:621px;color:#8a8a8a;"> 35</span>
<svg class="s" style="left:813px;top:620px" width="8" height="17" viewBox="0 0 8 17"><path d="M1.4 4.3h1.5v8.3h-1.5zM4.6 4.3h1.5v8.3h-1.5zM0.6 6.2h6.4v1.2h-6.4zM0.6 9.2h6.4v1.2h-6.4z" fill="#14bcbc"/></svg>
<span class="t" style="left:821px;top:621px;color:#4b525a;">·</span>
<span class="t" style="left:829px;top:621px;color:#14bcbc;">mouse</span>
<span class="t" style="left:869px;top:621px;color:#4b525a;">¬</span>
<div class="b" style="left:781px;top:637px;width:32px;background:#3a3a3a;"></div>
<span class="t" style="left:781px;top:638px;color:#8a8a8a;"> 36</span>
<span class="t" style="left:813px;top:638px;color:#50d63a;">set</span>
<span class="t" style="left:837px;top:638px;color:#4b525a;">·</span>
<span class="t" style="left:845px;top:638px;color:#f2d42e;">-g</span>
<span class="t" style="left:861px;top:638px;color:#4b525a;">·</span>
<span class="t" style="left:869px;top:638px;color:#ee386e;">mode-mouse</span>
<span class="t" style="left:949px;top:638px;color:#4b525a;">·</span>
<span class="t" style="left:957px;top:638px;color:#b86f2a;">on</span>
<span class="t" style="left:973px;top:638px;color:#4b525a;">¬</span>
<div class="b" style="left:781px;top:654px;width:32px;background:#3a3a3a;"></div>
<span class="t" style="left:781px;top:655px;color:#8a8a8a;"> 37</span>
<span class="t" style="left:813px;top:655px;color:#50d63a;">set</span>
<span class="t" style="left:837px;top:655px;color:#4b525a;">·</span>
<span class="t" style="left:845px;top:655px;color:#f2d42e;">-g</span>
<span class="t" style="left:861px;top:655px;color:#4b525a;">·</span>
<span class="t" style="left:869px;top:655px;color:#ee386e;">mouse-select-pane</span>
<span class="t" style="left:1005px;top:655px;color:#4b525a;">·</span>
<span class="t" style="left:1013px;top:655px;color:#b86f2a;">on</span>
<span class="t" style="left:1029px;top:655px;color:#4b525a;">¬</span>
<div class="b" style="left:781px;top:671px;width:32px;background:#3a3a3a;"></div>
<span class="t" style="left:781px;top:672px;color:#8a8a8a;"> 38</span>
<span class="t" style="left:813px;top:672px;color:#50d63a;">set</span>
<span class="t" style="left:837px;top:672px;color:#4b525a;">·</span>
<span class="t" style="left:845px;top:672px;color:#f2d42e;">-g</span>
<span class="t" style="left:861px;top:672px;color:#4b525a;">·</span>
<span class="t" style="left:869px;top:672px;color:#ee386e;">mouse-resize-pane</span>
<span class="t" style="left:1005px;top:672px;color:#4b525a;">¬</span>
<div class="b" style="left:781px;top:688px;width:32px;background:#3a3a3a;"></div>
<span class="t" style="left:781px;top:689px;color:#8a8a8a;"> 39</span>
<span class="t" style="left:813px;top:689px;color:#50d63a;">set</span>
<span class="t" style="left:837px;top:689px;color:#4b525a;">·</span>
<span class="t" style="left:845px;top:689px;color:#f2d42e;">-g</span>
<span class="t" style="left:861px;top:689px;color:#4b525a;">·</span>
<span class="t" style="left:869px;top:689px;color:#ee386e;">mouse-select-window</span>
<span class="t" style="left:1021px;top:689px;color:#4b525a;">·</span>
<span class="t" style="left:1029px;top:689px;color:#b86f2a;">on</span>
<span class="t" style="left:1045px;top:689px;color:#4b525a;">¬</span>
<div class="b" style="left:781px;top:705px;width:32px;background:#3a3a3a;"></div>
<span class="t" style="left:781px;top:706px;color:#8a8a8a;"> 40</span>
<span class="t" style="left:813px;top:706px;color:#4b525a;">¬</span>
<div class="b" style="left:781px;top:722px;width:32px;background:#3a3a3a;"></div>
<span class="t" style="left:781px;top:723px;color:#8a8a8a;"> 41</span>
<svg class="s" style="left:813px;top:722px" width="336" height="17" viewBox="0 0 336 17"><path d="M1.4 4.3h1.5v8.3h-1.5zM4.6 4.3h1.5v8.3h-1.5zM0.6 6.2h6.4v1.2h-6.4zM0.6 9.2h6.4v1.2h-6.4zM9.4 4.3h1.5v8.3h-1.5zM12.6 4.3h1.5v8.3h-1.5zM8.6 6.2h6.4v1.2h-6.4zM8.6 9.2h6.4v1.2h-6.4zM17.4 4.3h1.5v8.3h-1.5zM20.6 4.3h1.5v8.3h-1.5zM16.6 6.2h6.4v1.2h-6.4zM16.6 9.2h6.4v1.2h-6.4zM25.4 4.3h1.5v8.3h-1.5zM28.6 4.3h1.5v8.3h-1.5zM24.6 6.2h6.4v1.2h-6.4zM24.6 9.2h6.4v1.2h-6.4zM33.4 4.3h1.5v8.3h-1.5zM36.6 4.3h1.5v8.3h-1.5zM32.6 6.2h6.4v1.2h-6.4zM32.6 9.2h6.4v1.2h-6.4zM41.4 4.3h1.5v8.3h-1.5zM44.6 4.3h1.5v8.3h-1.5zM40.6 6.2h6.4v1.2h-6.4zM40.6 9.2h6.4v1.2h-6.4zM49.4 4.3h1.5v8.3h-1.5zM52.6 4.3h1.5v8.3h-1.5zM48.6 6.2h6.4v1.2h-6.4zM48.6 9.2h6.4v1.2h-6.4zM57.4 4.3h1.5v8.3h-1.5zM60.6 4.3h1.5v8.3h-1.5zM56.6 6.2h6.4v1.2h-6.4zM56.6 9.2h6.4v1.2h-6.4zM65.4 4.3h1.5v8.3h-1.5zM68.6 4.3h1.5v8.3h-1.5zM64.6 6.2h6.4v1.2h-6.4zM64.6 9.2h6.4v1.2h-6.4zM73.4 4.3h1.5v8.3h-1.5zM76.6 4.3h1.5v8.3h-1.5zM72.6 6.2h6.4v1.2h-6.4zM72.6 9.2h6.4v1.2h-6.4zM81.4 4.3h1.5v8.3h-1.5zM84.6 4.3h1.5v8.3h-1.5zM80.6 6.2h6.4v1.2h-6.4zM80.6 9.2h6.4v1.2h-6.4zM89.4 4.3h1.5v8.3h-1.5zM92.6 4.3h1.5v8.3h-1.5zM88.6 6.2h6.4v1.2h-6.4zM88.6 9.2h6.4v1.2h-6.4zM97.4 4.3h1.5v8.3h-1.5zM100.6 4.3h1.5v8.3h-1.5zM96.6 6.2h6.4v1.2h-6.4zM96.6 9.2h6.4v1.2h-6.4zM105.4 4.3h1.5v8.3h-1.5zM108.6 4.3h1.5v8.3h-1.5zM104.6 6.2h6.4v1.2h-6.4zM104.6 9.2h6.4v1.2h-6.4zM113.4 4.3h1.5v8.3h-1.5zM116.6 4.3h1.5v8.3h-1.5zM112.6 6.2h6.4v1.2h-6.4zM112.6 9.2h6.4v1.2h-6.4zM121.4 4.3h1.5v8.3h-1.5zM124.6 4.3h1.5v8.3h-1.5zM120.6 6.2h6.4v1.2h-6.4zM120.6 9.2h6.4v1.2h-6.4zM129.4 4.3h1.5v8.3h-1.5zM132.6 4.3h1.5v8.3h-1.5zM128.6 6.2h6.4v1.2h-6.4zM128.6 9.2h6.4v1.2h-6.4zM137.4 4.3h1.5v8.3h-1.5zM140.6 4.3h1.5v8.3h-1.5zM136.6 6.2h6.4v1.2h-6.4zM136.6 9.2h6.4v1.2h-6.4zM145.4 4.3h1.5v8.3h-1.5zM148.6 4.3h1.5v8.3h-1.5zM144.6 6.2h6.4v1.2h-6.4zM144.6 9.2h6.4v1.2h-6.4zM153.4 4.3h1.5v8.3h-1.5zM156.6 4.3h1.5v8.3h-1.5zM152.6 6.2h6.4v1.2h-6.4zM152.6 9.2h6.4v1.2h-6.4zM161.4 4.3h1.5v8.3h-1.5zM164.6 4.3h1.5v8.3h-1.5zM160.6 6.2h6.4v1.2h-6.4zM160.6 9.2h6.4v1.2h-6.4zM169.4 4.3h1.5v8.3h-1.5zM172.6 4.3h1.5v8.3h-1.5zM168.6 6.2h6.4v1.2h-6.4zM168.6 9.2h6.4v1.2h-6.4zM177.4 4.3h1.5v8.3h-1.5zM180.6 4.3h1.5v8.3h-1.5zM176.6 6.2h6.4v1.2h-6.4zM176.6 9.2h6.4v1.2h-6.4zM185.4 4.3h1.5v8.3h-1.5zM188.6 4.3h1.5v8.3h-1.5zM184.6 6.2h6.4v1.2h-6.4zM184.6 9.2h6.4v1.2h-6.4zM193.4 4.3h1.5v8.3h-1.5zM196.6 4.3h1.5v8.3h-1.5zM192.6 6.2h6.4v1.2h-6.4zM192.6 9.2h6.4v1.2h-6.4zM201.4 4.3h1.5v8.3h-1.5zM204.6 4.3h1.5v8.3h-1.5zM200.6 6.2h6.4v1.2h-6.4zM200.6 9.2h6.4v1.2h-6.4zM209.4 4.3h1.5v8.3h-1.5zM212.6 4.3h1.5v8.3h-1.5zM208.6 6.2h6.4v1.2h-6.4zM208.6 9.2h6.4v1.2h-6.4zM217.4 4.3h1.5v8.3h-1.5zM220.6 4.3h1.5v8.3h-1.5zM216.6 6.2h6.4v1.2h-6.4zM216.6 9.2h6.4v1.2h-6.4zM225.4 4.3h1.5v8.3h-1.5zM228.6 4.3h1.5v8.3h-1.5zM224.6 6.2h6.4v1.2h-6.4zM224.6 9.2h6.4v1.2h-6.4zM233.4 4.3h1.5v8.3h-1.5zM236.6 4.3h1.5v8.3h-1.5zM232.6 6.2h6.4v1.2h-6.4zM232.6 9.2h6.4v1.2h-6.4zM241.4 4.3h1.5v8.3h-1.5zM244.6 4.3h1.5v8.3h-1.5zM240.6 6.2h6.4v1.2h-6.4zM240.6 9.2h6.4v1.2h-6.4zM249.4 4.3h1.5v8.3h-1.5zM252.6 4.3h1.5v8.3h-1.5zM248.6 6.2h6.4v1.2h-6.4zM248.6 9.2h6.4v1.2h-6.4zM257.4 4.3h1.5v8.3h-1.5zM260.6 4.3h1.5v8.3h-1.5zM256.6 6.2h6.4v1.2h-6.4zM256.6 9.2h6.4v1.2h-6.4zM265.4 4.3h1.5v8.3h-1.5zM268.6 4.3h1.5v8.3h-1.5zM264.6 6.2h6.4v1.2h-6.4zM264.6 9.2h6.4v1.2h-6.4zM273.4 4.3h1.5v8.3h-1.5zM276.6 4.3h1.5v8.3h-1.5zM272.6 6.2h6.4v1.2h-6.4zM272.6 9.2h6.4v1.2h-6.4zM281.4 4.3h1.5v8.3h-1.5zM284.6 4.3h1.5v8.3h-1.5zM280.6 6.2h6.4v1.2h-6.4zM280.6 9.2h6.4v1.2h-6.4zM289.4 4.3h1.5v8.3h-1.5zM292.6 4.3h1.5v8.3h-1.5zM288.6 6.2h6.4v1.2h-6.4zM288.6 9.2h6.4v1.2h-6.4zM297.4 4.3h1.5v8.3h-1.5zM300.6 4.3h1.5v8.3h-1.5zM296.6 6.2h6.4v1.2h-6.4zM296.6 9.2h6.4v1.2h-6.4zM305.4 4.3h1.5v8.3h-1.5zM308.6 4.3h1.5v8.3h-1.5zM304.6 6.2h6.4v1.2h-6.4zM304.6 9.2h6.4v1.2h-6.4zM313.4 4.3h1.5v8.3h-1.5zM316.6 4.3h1.5v8.3h-1.5zM312.6 6.2h6.4v1.2h-6.4zM312.6 9.2h6.4v1.2h-6.4zM321.4 4.3h1.5v8.3h-1.5zM324.6 4.3h1.5v8.3h-1.5zM320.6 6.2h6.4v1.2h-6.4zM320.6 9.2h6.4v1.2h-6.4zM329.4 4.3h1.5v8.3h-1.5zM332.6 4.3h1.5v8.3h-1.5zM328.6 6.2h6.4v1.2h-6.4zM328.6 9.2h6.4v1.2h-6.4z" fill="#14bcbc"/></svg>
<span class="t" style="left:1149px;top:723px;color:#4b525a;">¬</span>
<div class="b" style="left:781px;top:739px;width:32px;background:#3a3a3a;"></div>
<span class="t" style="left:781px;top:740px;color:#8a8a8a;"> 42</span>
<svg class="s" style="left:813px;top:739px" width="24" height="17" viewBox="0 0 24 17"><path d="M1.4 4.3h1.5v8.3h-1.5zM4.6 4.3h1.5v8.3h-1.5zM0.6 6.2h6.4v1.2h-6.4zM0.6 9.2h6.4v1.2h-6.4zM9.4 4.3h1.5v8.3h-1.5zM12.6 4.3h1.5v8.3h-1.5zM8.6 6.2h6.4v1.2h-6.4zM8.6 9.2h6.4v1.2h-6.4zM17.4 4.3h1.5v8.3h-1.5zM20.6 4.3h1.5v8.3h-1.5zM16.6 6.2h6.4v1.2h-6.4zM16.6 9.2h6.4v1.2h-6.4z" fill="#14bcbc"/></svg>
<span class="t" style="left:837px;top:740px;color:#4b525a;">·</span>
<span class="t" style="left:845px;top:740px;color:#14bcbc;">Styling</span>
<span class="t" style="left:901px;top:740px;color:#4b525a;">¬</span>
<div class="b" style="left:781px;top:756px;width:32px;background:#3a3a3a;"></div>
<span class="t" style="left:781px;top:757px;color:#8a8a8a;"> 43</span>
<svg class="s" style="left:813px;top:756px" width="336" height="17" viewBox="0 0 336 17"><path d="M1.4 4.3h1.5v8.3h-1.5zM4.6 4.3h1.5v8.3h-1.5zM0.6 6.2h6.4v1.2h-6.4zM0.6 9.2h6.4v1.2h-6.4zM9.4 4.3h1.5v8.3h-1.5zM12.6 4.3h1.5v8.3h-1.5zM8.6 6.2h6.4v1.2h-6.4zM8.6 9.2h6.4v1.2h-6.4zM17.4 4.3h1.5v8.3h-1.5zM20.6 4.3h1.5v8.3h-1.5zM16.6 6.2h6.4v1.2h-6.4zM16.6 9.2h6.4v1.2h-6.4zM25.4 4.3h1.5v8.3h-1.5zM28.6 4.3h1.5v8.3h-1.5zM24.6 6.2h6.4v1.2h-6.4zM24.6 9.2h6.4v1.2h-6.4zM33.4 4.3h1.5v8.3h-1.5zM36.6 4.3h1.5v8.3h-1.5zM32.6 6.2h6.4v1.2h-6.4zM32.6 9.2h6.4v1.2h-6.4zM41.4 4.3h1.5v8.3h-1.5zM44.6 4.3h1.5v8.3h-1.5zM40.6 6.2h6.4v1.2h-6.4zM40.6 9.2h6.4v1.2h-6.4zM49.4 4.3h1.5v8.3h-1.5zM52.6 4.3h1.5v8.3h-1.5zM48.6 6.2h6.4v1.2h-6.4zM48.6 9.2h6.4v1.2h-6.4zM57.4 4.3h1.5v8.3h-1.5zM60.6 4.3h1.5v8.3h-1.5zM56.6 6.2h6.4v1.2h-6.4zM56.6 9.2h6.4v1.2h-6.4zM65.4 4.3h1.5v8.3h-1.5zM68.6 4.3h1.5v8.3h-1.5zM64.6 6.2h6.4v1.2h-6.4zM64.6 9.2h6.4v1.2h-6.4zM73.4 4.3h1.5v8.3h-1.5zM76.6 4.3h1.5v8.3h-1.5zM72.6 6.2h6.4v1.2h-6.4zM72.6 9.2h6.4v1.2h-6.4zM81.4 4.3h1.5v8.3h-1.5zM84.6 4.3h1.5v8.3h-1.5zM80.6 6.2h6.4v1.2h-6.4zM80.6 9.2h6.4v1.2h-6.4zM89.4 4.3h1.5v8.3h-1.5zM92.6 4.3h1.5v8.3h-1.5zM88.6 6.2h6.4v1.2h-6.4zM88.6 9.2h6.4v1.2h-6.4zM97.4 4.3h1.5v8.3h-1.5zM100.6 4.3h1.5v8.3h-1.5zM96.6 6.2h6.4v1.2h-6.4zM96.6 9.2h6.4v1.2h-6.4zM105.4 4.3h1.5v8.3h-1.5zM108.6 4.3h1.5v8.3h-1.5zM104.6 6.2h6.4v1.2h-6.4zM104.6 9.2h6.4v1.2h-6.4zM113.4 4.3h1.5v8.3h-1.5zM116.6 4.3h1.5v8.3h-1.5zM112.6 6.2h6.4v1.2h-6.4zM112.6 9.2h6.4v1.2h-6.4zM121.4 4.3h1.5v8.3h-1.5zM124.6 4.3h1.5v8.3h-1.5zM120.6 6.2h6.4v1.2h-6.4zM120.6 9.2h6.4v1.2h-6.4zM129.4 4.3h1.5v8.3h-1.5zM132.6 4.3h1.5v8.3h-1.5zM128.6 6.2h6.4v1.2h-6.4zM128.6 9.2h6.4v1.2h-6.4zM137.4 4.3h1.5v8.3h-1.5zM140.6 4.3h1.5v8.3h-1.5zM136.6 6.2h6.4v1.2h-6.4zM136.6 9.2h6.4v1.2h-6.4zM145.4 4.3h1.5v8.3h-1.5zM148.6 4.3h1.5v8.3h-1.5zM144.6 6.2h6.4v1.2h-6.4zM144.6 9.2h6.4v1.2h-6.4zM153.4 4.3h1.5v8.3h-1.5zM156.6 4.3h1.5v8.3h-1.5zM152.6 6.2h6.4v1.2h-6.4zM152.6 9.2h6.4v1.2h-6.4zM161.4 4.3h1.5v8.3h-1.5zM164.6 4.3h1.5v8.3h-1.5zM160.6 6.2h6.4v1.2h-6.4zM160.6 9.2h6.4v1.2h-6.4zM169.4 4.3h1.5v8.3h-1.5zM172.6 4.3h1.5v8.3h-1.5zM168.6 6.2h6.4v1.2h-6.4zM168.6 9.2h6.4v1.2h-6.4zM177.4 4.3h1.5v8.3h-1.5zM180.6 4.3h1.5v8.3h-1.5zM176.6 6.2h6.4v1.2h-6.4zM176.6 9.2h6.4v1.2h-6.4zM185.4 4.3h1.5v8.3h-1.5zM188.6 4.3h1.5v8.3h-1.5zM184.6 6.2h6.4v1.2h-6.4zM184.6 9.2h6.4v1.2h-6.4zM193.4 4.3h1.5v8.3h-1.5zM196.6 4.3h1.5v8.3h-1.5zM192.6 6.2h6.4v1.2h-6.4zM192.6 9.2h6.4v1.2h-6.4zM201.4 4.3h1.5v8.3h-1.5zM204.6 4.3h1.5v8.3h-1.5zM200.6 6.2h6.4v1.2h-6.4zM200.6 9.2h6.4v1.2h-6.4zM209.4 4.3h1.5v8.3h-1.5zM212.6 4.3h1.5v8.3h-1.5zM208.6 6.2h6.4v1.2h-6.4zM208.6 9.2h6.4v1.2h-6.4zM217.4 4.3h1.5v8.3h-1.5zM220.6 4.3h1.5v8.3h-1.5zM216.6 6.2h6.4v1.2h-6.4zM216.6 9.2h6.4v1.2h-6.4zM225.4 4.3h1.5v8.3h-1.5zM228.6 4.3h1.5v8.3h-1.5zM224.6 6.2h6.4v1.2h-6.4zM224.6 9.2h6.4v1.2h-6.4zM233.4 4.3h1.5v8.3h-1.5zM236.6 4.3h1.5v8.3h-1.5zM232.6 6.2h6.4v1.2h-6.4zM232.6 9.2h6.4v1.2h-6.4zM241.4 4.3h1.5v8.3h-1.5zM244.6 4.3h1.5v8.3h-1.5zM240.6 6.2h6.4v1.2h-6.4zM240.6 9.2h6.4v1.2h-6.4zM249.4 4.3h1.5v8.3h-1.5zM252.6 4.3h1.5v8.3h-1.5zM248.6 6.2h6.4v1.2h-6.4zM248.6 9.2h6.4v1.2h-6.4zM257.4 4.3h1.5v8.3h-1.5zM260.6 4.3h1.5v8.3h-1.5zM256.6 6.2h6.4v1.2h-6.4zM256.6 9.2h6.4v1.2h-6.4zM265.4 4.3h1.5v8.3h-1.5zM268.6 4.3h1.5v8.3h-1.5zM264.6 6.2h6.4v1.2h-6.4zM264.6 9.2h6.4v1.2h-6.4zM273.4 4.3h1.5v8.3h-1.5zM276.6 4.3h1.5v8.3h-1.5zM272.6 6.2h6.4v1.2h-6.4zM272.6 9.2h6.4v1.2h-6.4zM281.4 4.3h1.5v8.3h-1.5zM284.6 4.3h1.5v8.3h-1.5zM280.6 6.2h6.4v1.2h-6.4zM280.6 9.2h6.4v1.2h-6.4zM289.4 4.3h1.5v8.3h-1.5zM292.6 4.3h1.5v8.3h-1.5zM288.6 6.2h6.4v1.2h-6.4zM288.6 9.2h6.4v1.2h-6.4zM297.4 4.3h1.5v8.3h-1.5zM300.6 4.3h1.5v8.3h-1.5zM296.6 6.2h6.4v1.2h-6.4zM296.6 9.2h6.4v1.2h-6.4zM305.4 4.3h1.5v8.3h-1.5zM308.6 4.3h1.5v8.3h-1.5zM304.6 6.2h6.4v1.2h-6.4zM304.6 9.2h6.4v1.2h-6.4zM313.4 4.3h1.5v8.3h-1.5zM316.6 4.3h1.5v8.3h-1.5zM312.6 6.2h6.4v1.2h-6.4zM312.6 9.2h6.4v1.2h-6.4zM321.4 4.3h1.5v8.3h-1.5zM324.6 4.3h1.5v8.3h-1.5zM320.6 6.2h6.4v1.2h-6.4zM320.6 9.2h6.4v1.2h-6.4zM329.4 4.3h1.5v8.3h-1.5zM332.6 4.3h1.5v8.3h-1.5zM328.6 6.2h6.4v1.2h-6.4zM328.6 9.2h6.4v1.2h-6.4z" fill="#14bcbc"/></svg>
<span class="t" style="left:1149px;top:757px;color:#4b525a;">¬</span>
<div class="b" style="left:781px;top:773px;width:32px;background:#3a3a3a;"></div>
<span class="t" style="left:781px;top:774px;color:#8a8a8a;"> 44</span>
<span class="t" style="left:813px;top:774px;color:#4b525a;">¬</span>
<div class="b" style="left:781px;top:790px;width:32px;background:#3a3a3a;"></div>
<span class="t" style="left:781px;top:791px;color:#8a8a8a;"> 45</span>
<svg class="s" style="left:813px;top:790px" width="8" height="17" viewBox="0 0 8 17"><path d="M1.4 4.3h1.5v8.3h-1.5zM4.6 4.3h1.5v8.3h-1.5zM0.6 6.2h6.4v1.2h-6.4zM0.6 9.2h6.4v1.2h-6.4z" fill="#14bcbc"/></svg>
<span class="t" style="left:821px;top:791px;color:#4b525a;">·</span>
<span class="t" style="left:829px;top:791px;color:#14bcbc;">panes</span>
<span class="t" style="left:869px;top:791px;color:#4b525a;">¬</span>
<div class="b" style="left:781px;top:807px;width:32px;background:#3a3a3a;"></div>
<span class="t" style="left:781px;top:808px;color:#8a8a8a;"> 46</span>
<span class="t" style="left:813px;top:808px;color:#50d63a;">set</span>
<span class="t" style="left:837px;top:808px;color:#4b525a;">·</span>
<span class="t" style="left:845px;top:808px;color:#f2d42e;">-g</span>
<span class="t" style="left:861px;top:808px;color:#4b525a;">·</span>
<span class="t" style="left:869px;top:808px;color:#ee386e;">pane-border-bg</span>
<span class="t" style="left:981px;top:808px;color:#4b525a;">·</span>
<span class="t" style="left:989px;top:808px;color:#b86f2a;">colour235</span>
<span class="t" style="left:1061px;top:808px;color:#4b525a;">¬</span>
<div class="b" style="left:781px;top:824px;width:32px;background:#3a3a3a;"></div>
<span class="t" style="left:781px;top:825px;color:#8a8a8a;"> 47</span>
<span class="t" style="left:813px;top:825px;color:#50d63a;">set</span>
<span class="t" style="left:837px;top:825px;color:#4b525a;">·</span>
<span class="t" style="left:845px;top:825px;color:#f2d42e;">-g</span>
<span class="t" style="left:861px;top:825px;color:#4b525a;">·</span>
<span class="t" style="left:869px;top:825px;color:#ee386e;">pane-border-fg</span>
<span class="t" style="left:981px;top:825px;color:#4b525a;">·</span>
<span class="t" style="left:989px;top:825px;color:#b86f2a;">colour238</span>
<span class="t" style="left:1061px;top:825px;color:#4b525a;">¬</span>
<div class="b" style="left:781px;top:841px;width:32px;background:#3a3a3a;"></div>
<span class="t" style="left:781px;top:842px;color:#8a8a8a;"> 48</span>
<span class="t" style="left:813px;top:842px;color:#50d63a;">set</span>
<span class="t" style="left:837px;top:842px;color:#4b525a;">·</span>
<span class="t" style="left:845px;top:842px;color:#f2d42e;">-g</span>
<span class="t" style="left:861px;top:842px;color:#4b525a;">·</span>
<span class="t" style="left:869px;top:842px;color:#ee386e;">pane-active-border-bg</span>
<span class="t" style="left:1037px;top:842px;color:#4b525a;">·</span>
<span class="t" style="left:1045px;top:842px;color:#b86f2a;">colour236</span>
<span class="t" style="left:1117px;top:842px;color:#4b525a;">¬</span>
<div class="b" style="left:781px;top:858px;width:32px;background:#3a3a3a;"></div>
<span class="t" style="left:781px;top:859px;color:#8a8a8a;"> 49</span>
<span class="t" style="left:813px;top:859px;color:#50d63a;">set</span>
<span class="t" style="left:837px;top:859px;color:#4b525a;">·</span>
<span class="t" style="left:845px;top:859px;color:#f2d42e;">-g</span>
<span class="t" style="left:861px;top:859px;color:#4b525a;">·</span>
<span class="t" style="left:869px;top:859px;color:#ee386e;">pane-active-border-fg</span>
<span class="t" style="left:1037px;top:859px;color:#4b525a;">·</span>
<span class="t" style="left:1045px;top:859px;color:#b86f2a;">colour51</span>
<span class="t" style="left:1109px;top:859px;color:#4b525a;">¬</span>
<div class="b" style="left:781px;top:875px;width:32px;background:#3a3a3a;"></div>
<span class="t" style="left:781px;top:876px;color:#8a8a8a;"> 50</span>
<span class="t" style="left:813px;top:876px;color:#4b525a;">¬</span>
<div class="b" style="left:781px;top:892px;width:32px;background:#3a3a3a;"></div>
<span class="t" style="left:781px;top:893px;color:#8a8a8a;"> 51</span>
<svg class="s" style="left:813px;top:892px" width="8" height="17" viewBox="0 0 8 17"><path d="M1.4 4.3h1.5v8.3h-1.5zM4.6 4.3h1.5v8.3h-1.5zM0.6 6.2h6.4v1.2h-6.4zM0.6 9.2h6.4v1.2h-6.4z" fill="#14bcbc"/></svg>
<span class="t" style="left:821px;top:893px;color:#4b525a;">·</span>
<span class="t" style="left:829px;top:893px;color:#14bcbc;">status</span>
<span class="t" style="left:877px;top:893px;color:#4b525a;">·</span>
<span class="t" style="left:885px;top:893px;color:#14bcbc;">line</span>
<span class="t" style="left:917px;top:893px;color:#4b525a;">¬</span>
<div class="b" style="left:781px;top:909px;width:32px;background:#3a3a3a;"></div>
<span class="t" style="left:781px;top:910px;color:#8a8a8a;"> 52</span>
<span class="t" style="left:813px;top:910px;color:#50d63a;">set</span>
<span class="t" style="left:837px;top:910px;color:#4b525a;">·</span>
<span class="t" style="left:845px;top:910px;color:#f2d42e;">-g</span>
<span class="t" style="left:861px;top:910px;color:#4b525a;">·</span>
<span class="t" style="left:869px;top:910px;color:#ee386e;">status-utf8</span>
<span class="t" style="left:957px;top:910px;color:#4b525a;">·</span>
<span class="t" style="left:965px;top:910px;color:#b86f2a;">on</span>
<span class="t" style="left:981px;top:910px;color:#4b525a;">¬</span>
<div class="b" style="left:781px;top:926px;width:32px;background:#3a3a3a;"></div>
<span class="t" style="left:781px;top:927px;color:#8a8a8a;"> 53</span>
<span class="t" style="left:813px;top:927px;color:#50d63a;">set</span>
<span class="t" style="left:837px;top:927px;color:#4b525a;">·</span>
<span class="t" style="left:845px;top:927px;color:#f2d42e;">-g</span>
<span class="t" style="left:861px;top:927px;color:#4b525a;">·</span>
<span class="t" style="left:869px;top:927px;color:#ee386e;">status-justify</span>
<span class="t" style="left:981px;top:927px;color:#4b525a;">·</span>
<span class="t" style="left:989px;top:927px;color:#b86f2a;">left</span>
<span class="t" style="left:1021px;top:927px;color:#4b525a;">¬</span>
<div class="b" style="left:781px;top:943px;width:800px;background:#222222;"></div>
<div class="b" style="left:781px;top:943px;width:64px;background:#d9f52d;"></div>
<span class="t" style="left:789px;top:944px;color:#00005f;-webkit-text-stroke:0.5px currentColor;">NORMAL</span>
<div class="b" style="left:845px;top:943px;width:8px;background:#444444;"></div>
<svg class="s" style="left:845px;top:943px" width="10" height="17"><polygon points="0,0 8,8.5 0,17" fill="#d9f52d"/></svg>
<div class="b" style="left:853px;top:943px;width:80px;background:#444444;"></div>
<svg class="s" style="left:861px;top:943px" width="8" height="17" viewBox="0 0 8 17"><path d="M2.2 1.2V8.3" stroke="#ffffff" stroke-width="1.7" fill="none"/><path d="M6.5 4V6.6Q6.5 8.4 4.4 9.4Q2.2 10.4 2.2 12.6V15.6" stroke="#ffffff" stroke-width="1.7" fill="none"/><circle cx="6.5" cy="3.7" r="1.1" fill="#ffffff"/></svg>
<span class="t" style="left:877px;top:944px;color:#eeeeee;">master</span>
<div class="b" style="left:933px;top:943px;width:8px;background:#222222;"></div>
<svg class="s" style="left:933px;top:943px" width="10" height="17"><polygon points="0,0 8,8.5 0,17" fill="#444444"/></svg>
<span class="t" style="left:949px;top:944px;color:#5fdfaf;">.tmux.conf</span>
<span class="t" style="left:1165px;top:944px;color:#66eab0;">tmux</span>
<svg class="s" style="left:0;top:0" width="1586" height="996"><circle cx="1211.4" cy="950.4" r="5.0" fill="#66f0b0"/><circle cx="1216.02" cy="952.31" r="1.6" fill="#66f0b0"/><circle cx="1213.31" cy="955.02" r="1.6" fill="#66f0b0"/><circle cx="1209.49" cy="955.02" r="1.6" fill="#66f0b0"/><circle cx="1206.78" cy="952.31" r="1.6" fill="#66f0b0"/><circle cx="1206.78" cy="948.49" r="1.6" fill="#66f0b0"/><circle cx="1209.49" cy="945.78" r="1.6" fill="#66f0b0"/><circle cx="1213.31" cy="945.78" r="1.6" fill="#66f0b0"/><circle cx="1216.02" cy="948.49" r="1.6" fill="#66f0b0"/><circle cx="1211.4" cy="950.4" r="2.0" fill="#222222"/></svg>
<div class="b" style="left:1237px;top:943px;width:8px;background:#222222;"></div>
<svg class="s" style="left:1235px;top:943px" width="10" height="17"><polygon points="10,0 1.5,8.5 10,17" fill="#444444"/></svg>
<div class="b" style="left:1245px;top:943px;width:96px;background:#444444;"></div>
<span class="t" style="left:1261px;top:944px;color:#eeeeee;">utf-8</span>
<svg class="s" style="left:1310px;top:944px" width="11" height="13" viewBox="0 0 11 13"><path d="M5 3.4C6 2.8 8.2 2.6 9 4.3C7.9 5 7.8 7 9.5 7.7C9.1 9.3 7.9 11.2 6.8 11.2C6 11.2 5.8 10.8 5 10.8C4.2 10.8 3.8 11.2 3.2 11.2C2 11.2 0.6 8.9 0.6 6.7C0.6 4.5 2 3.2 3.3 3.2C4.2 3.2 4.6 3.6 5 3.4Z" fill="#ffffff"/><path d="M5.1 2.8C5.1 1.5 6 0.5 7.2 0.4C7.3 1.6 6.4 2.7 5.1 2.8Z" fill="#ffffff"/></svg>
<div class="b" style="left:1341px;top:943px;width:8px;background:#444444;"></div>
<svg class="s" style="left:1339px;top:943px" width="10" height="17"><polygon points="10,0 1.5,8.5 10,17" fill="#d9f52d"/></svg>
<div class="b" style="left:1349px;top:943px;width:128px;background:#d9f52d;"></div>
<span class="t" style="left:1373px;top:944px;color:#555555;-webkit-text-stroke:0;">6%</span>
<svg class="s" style="left:1397px;top:943px" width="9" height="17" viewBox="0 0 9 17"><text x="1.5" y="7.6" font-family="Liberation Mono" font-size="7.5" font-weight="bold" fill="#00005f">L</text><text x="2.3" y="14.6" font-family="Liberation Mono" font-size="8" font-weight="bold" fill="#00005f">N</text></svg>
<span class="t" style="left:1421px;top:944px;color:#00005f;font-weight:bold;">12:</span>
<span class="t" style="left:1461px;top:944px;color:#555555;-webkit-text-stroke:0;">1</span>
<div class="b" style="left:1477px;top:943px;width:8px;background:#d9f52d;"></div>
<svg class="s" style="left:1475px;top:943px" width="10" height="17"><polygon points="10,0 1.5,8.5 10,17" fill="#e2661c"/></svg>
<div class="b" style="left:1485px;top:943px;width:96px;background:#e2661c;"></div>
<svg class="s" style="left:1493px;top:943px" width="8" height="17" viewBox="0 0 8 17"><circle cx="4" cy="8.5" r="3" fill="#111111"/></svg>
<span class="t" style="left:1509px;top:944px;color:#2a1a0a;-webkit-text-stroke:0;">trailin…</span>
<div class="b" style="left:5px;top:977px;width:1576px;background:#1c1c1c;"></div>
<div class="b" style="left:5px;top:977px;width:56px;background:#ffffaf;"></div>
<span class="t" style="left:13px;top:978px;color:#111111;">eragos</span>
<div class="b" style="left:61px;top:977px;width:8px;background:#af87af;"></div>
<svg class="s" style="left:61px;top:977px" width="10" height="17"><polygon points="0,0 8,8.5 0,17" fill="#ffffaf"/></svg>
<div class="b" style="left:69px;top:977px;width:72px;background:#af87af;"></div>
<span class="t" style="left:77px;top:978px;color:#111111;">Mercury</span>
<div class="b" style="left:141px;top:977px;width:8px;background:#5f8787;"></div>
<svg class="s" style="left:141px;top:977px" width="10" height="17"><polygon points="0,0 8,8.5 0,17" fill="#af87af"/></svg>
<div class="b" style="left:149px;top:977px;width:112px;background:#5f8787;"></div>
<span class="t" style="left:157px;top:978px;color:#111111;">77.23.155.247</span>
<div class="b" style="left:261px;top:977px;width:8px;background:#1c1c1c;"></div>
<svg class="s" style="left:261px;top:977px" width="10" height="17"><polygon points="0,0 8,8.5 0,17" fill="#5f8787"/></svg>
<div class="b" style="left:277px;top:977px;width:168px;background:#262626;"></div>
<svg class="s" style="left:277px;top:977px" width="10" height="17"><polygon points="0,0 8,8.5 0,17" fill="#1c1c1c"/></svg>
<span class="t" style="left:293px;top:978px;color:#d7afaf;">1</span>
<span class="t" style="left:301px;top:978px;color:#444444;">:</span>
<span class="t" style="left:309px;top:978px;color:#bcbcbc;font-weight:bold;">..kills/gnuplot</span>
<span class="t" style="left:429px;top:978px;color:#777777;">-</span>
<div class="b" style="left:445px;top:977px;width:160px;background:#3a3a3a;"></div>
<div class="b" style="left:445px;top:977px;width:8px;background:#3a3a3a;"></div>
<svg class="s" style="left:445px;top:977px" width="10" height="17"><polygon points="0,0 8,8.5 0,17" fill="#262626"/></svg>
<span class="t" style="left:461px;top:978px;color:#d7afaf;">2</span>
<span class="t" style="left:469px;top:978px;color:#bcbcbc;">:</span>
<span class="t" style="left:477px;top:978px;color:#ffffff;font-weight:bold;">..Cobalt2-iterm</span>
<span class="t" style="left:597px;top:978px;color:#5fffd7;font-weight:bold;">*</span>
<div class="b" style="left:605px;top:977px;width:8px;background:#1c1c1c;"></div>
<svg class="s" style="left:605px;top:977px" width="10" height="17"><polygon points="0,0 8,8.5 0,17" fill="#3a3a3a"/></svg>
<div class="b" style="left:1149px;top:977px;width:344px;background:#5f8787;"></div>
<svg class="s" style="left:1149px;top:977px" width="10" height="17"><polygon points="0,0 8,8.5 0,17" fill="#1c1c1c"/></svg>
<span class="t" style="left:1165px;top:978px;color:#111111;">8385/16384MB [     ] 14.3% 2.65 2.91 2.95</span>
<div class="b" style="left:1501px;top:977px;width:80px;background:#0a6390;"></div>
<div class="b" style="left:1493px;top:977px;width:8px;background:#0a6390;"></div>
<svg class="s" style="left:1493px;top:977px" width="10" height="17"><polygon points="0,0 8,8.5 0,17" fill="#5f8787"/></svg>
<span class="t" style="left:1509px;top:978px;color:#111111;">15:49:13</span>
</body></html>
